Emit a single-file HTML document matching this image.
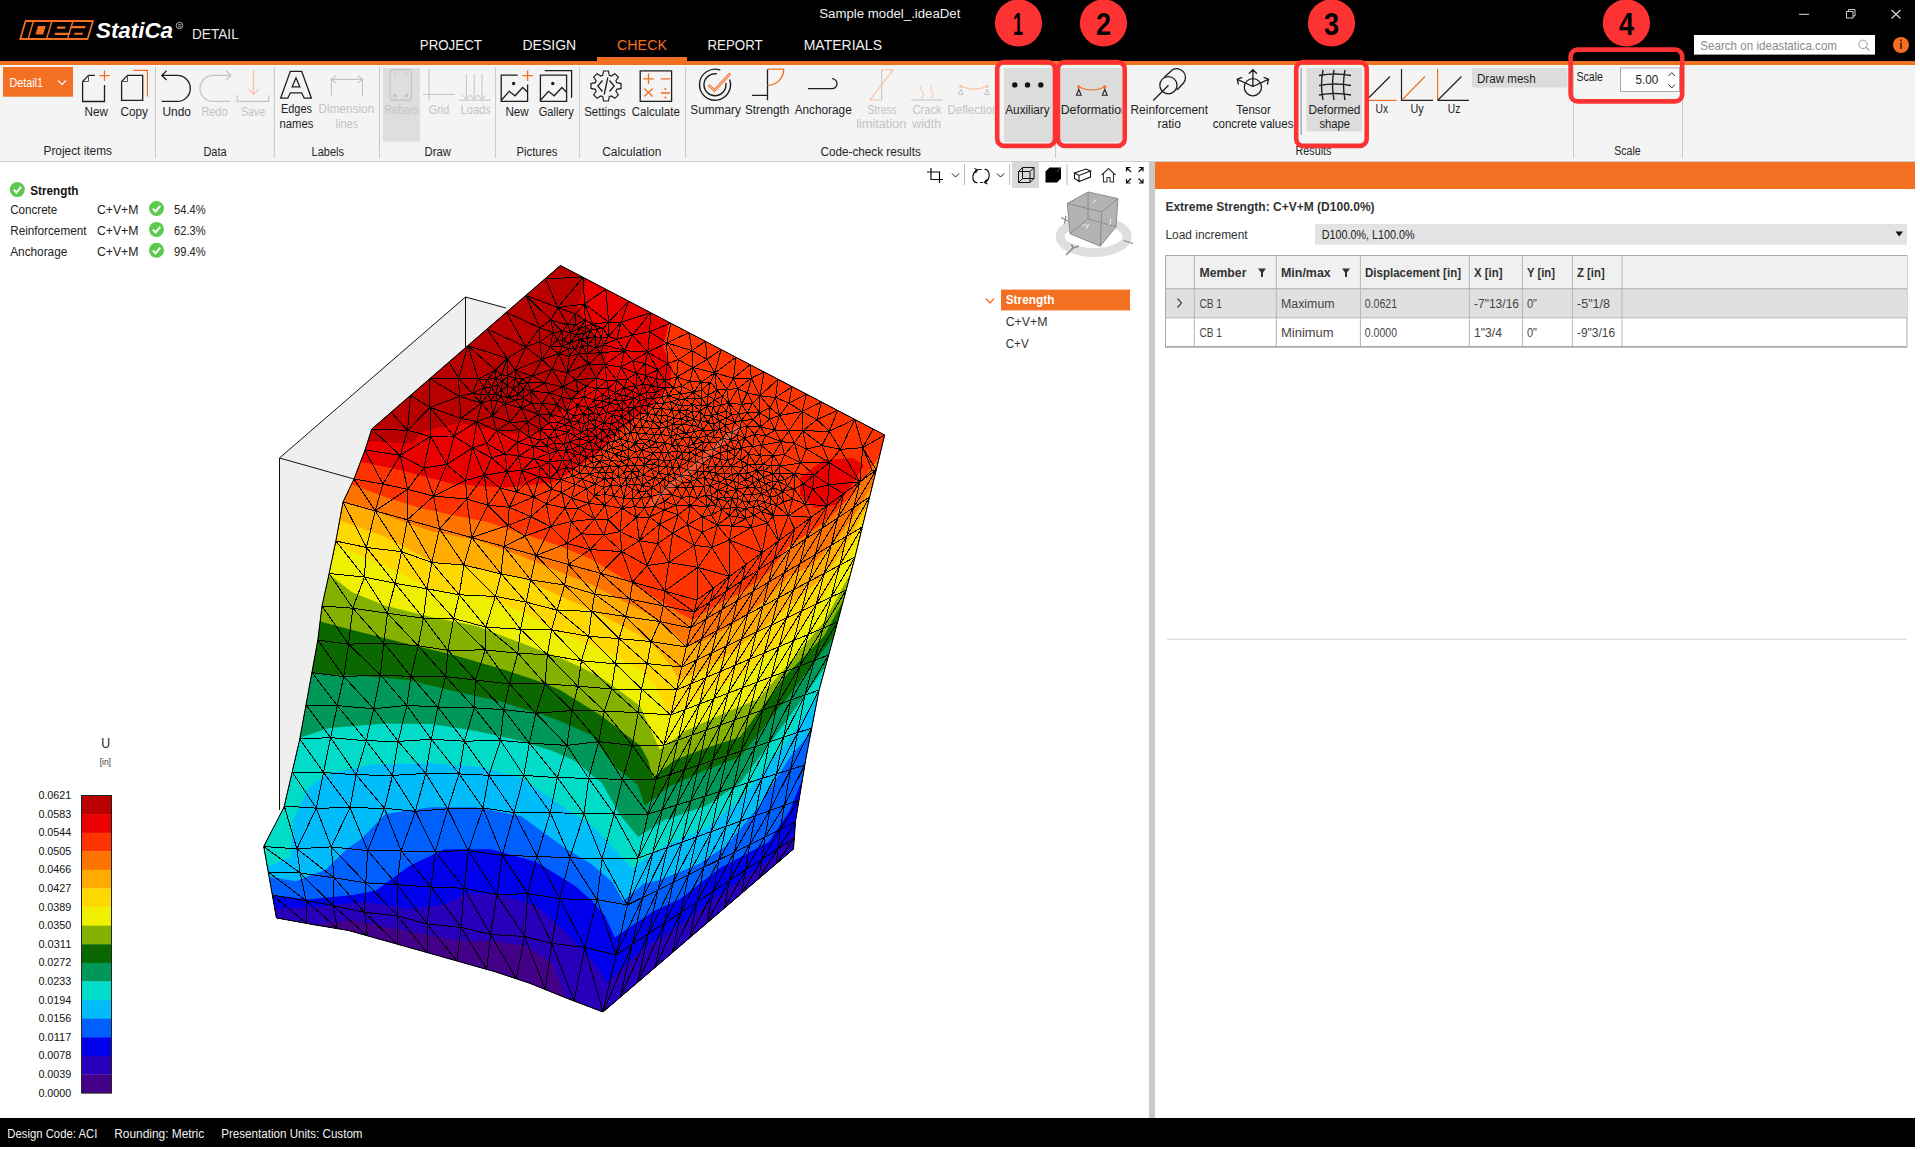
<!DOCTYPE html>
<html><head><meta charset="utf-8"><title>IDEA StatiCa Detail</title>
<style>html,body{margin:0;padding:0;background:#fff;}body{width:1920px;height:1150px;overflow:hidden;position:relative;font-family:"Liberation Sans",sans-serif;}
svg text{font-family:"Liberation Sans",sans-serif;}</style></head>
<body><svg width="1920" height="1150" viewBox="0 0 1920 1150" style="position:absolute;left:0;top:0;display:block">
<rect x="0" y="0" width="1915" height="61" fill="#000"/>
<rect x="0" y="61" width="1915" height="4" fill="#f36f21"/>
<rect x="597" y="57" width="90" height="4" fill="#f36f21"/>
<rect x="0" y="65" width="1915" height="96" fill="#f4f4f4"/>
<rect x="0" y="161" width="1915" height="1" fill="#cfcfcf"/>
<rect x="0" y="162" width="1149" height="956" fill="#fff"/>
<rect x="1149" y="162" width="6" height="956" fill="#c9c9c9"/>
<rect x="1155" y="162" width="760" height="27" fill="#f36f21"/>
<rect x="1155" y="189" width="760" height="929" fill="#fff"/>
<rect x="0" y="1118" width="1915" height="29" fill="#000"/>
<g transform="matrix(1,0,-0.3,1,12,0)"><path d="M19.9,21 H87.3 V39 H19.9 Z" fill="#000" stroke="#f36f21" stroke-width="1.8" stroke-linejoin="round"/><g fill="#f36f21"><rect x="27.1" y="21" width="1.5" height="18"/><rect x="45.5" y="21" width="1.5" height="18"/><rect x="66.5" y="21" width="1.5" height="18"/><rect x="33.8" y="26" width="7.7" height="8.5"/><rect x="53.3" y="26.5" width="8.5" height="2.2"/><rect x="52.9" y="32.7" width="15" height="2.3"/><rect x="67" y="26" width="14.5" height="2.3"/><rect x="72.4" y="32.7" width="8.4" height="2"/></g></g>
<text x="96.00" y="38.00" font-size="22.53" fill="#fff" font-weight="bold" font-style="italic" textLength="77.01" lengthAdjust="spacingAndGlyphs">StatiCa</text>
<circle cx="179.5" cy="25.5" r="3.3" fill="none" stroke="#ccc" stroke-width="0.8"/>
<text x="177.9" y="27.6" font-size="5" fill="#ccc">R</text>
<text x="192.00" y="38.75" font-size="14.90" fill="#e8e8e8" textLength="46.75" lengthAdjust="spacingAndGlyphs">DETAIL</text>
<text x="819.30" y="17.90" font-size="13.08" fill="#f0f0f0" textLength="141.10" lengthAdjust="spacingAndGlyphs">Sample model_.ideaDet</text>
<text x="419.75" y="49.75" font-size="15.41" fill="#f0f0f0" textLength="62.15" lengthAdjust="spacingAndGlyphs">PROJECT</text>
<text x="522.50" y="49.75" font-size="15.41" fill="#f0f0f0" textLength="53.75" lengthAdjust="spacingAndGlyphs">DESIGN</text>
<text x="617.00" y="49.75" font-size="15.41" fill="#f36f21" textLength="49.99" lengthAdjust="spacingAndGlyphs">CHECK</text>
<text x="707.50" y="49.75" font-size="15.41" fill="#f0f0f0" textLength="55.20" lengthAdjust="spacingAndGlyphs">REPORT</text>
<text x="803.70" y="49.75" font-size="15.41" fill="#f0f0f0" textLength="78.30" lengthAdjust="spacingAndGlyphs">MATERIALS</text>
<line x1="1799" y1="14.3" x2="1809" y2="14.3" stroke="#ddd" stroke-width="1"/>
<rect x="1846.5" y="11.5" width="6.5" height="6.5" fill="none" stroke="#ccc" stroke-width="1"/>
<path d="M1848.5,11.5 V9.5 H1855 V16 H1853" fill="none" stroke="#ccc" stroke-width="1"/>
<path d="M1891.5,10 L1900.5,18.5 M1900.5,10 L1891.5,18.5" stroke="#ddd" stroke-width="1.1"/>
<rect x="1694" y="35" width="181" height="19.6" fill="#fff"/>
<text x="1700.30" y="49.80" font-size="12.35" fill="#8a8a8a" textLength="136.70" lengthAdjust="spacingAndGlyphs">Search on ideastatica.com</text>
<circle cx="1863" cy="44.3" r="4.2" fill="none" stroke="#999" stroke-width="1"/><line x1="1866" y1="47.3" x2="1869.5" y2="50.5" stroke="#999" stroke-width="1.1"/>
<circle cx="1901" cy="45" r="8" fill="#f36f21"/>
<rect x="1900" y="42.5" width="2" height="6.5" fill="#6a2c08"/><rect x="1900" y="39.5" width="2" height="1.8" fill="#6a2c08"/>
<rect x="155.0" y="67" width="1" height="91" fill="#c8c8c8"/>
<rect x="273.8" y="67" width="1" height="91" fill="#c8c8c8"/>
<rect x="379.0" y="67" width="1" height="91" fill="#c8c8c8"/>
<rect x="495.1" y="67" width="1" height="91" fill="#c8c8c8"/>
<rect x="579.1" y="67" width="1" height="91" fill="#c8c8c8"/>
<rect x="685.1" y="67" width="1" height="91" fill="#c8c8c8"/>
<rect x="1055.0" y="67" width="1" height="91" fill="#c8c8c8"/>
<rect x="1573.0" y="67" width="1" height="91" fill="#c8c8c8"/>
<rect x="1682.0" y="67" width="1" height="91" fill="#c8c8c8"/>
<rect x="3" y="67" width="70" height="29.7" fill="#f36f21"/>
<text x="9.50" y="87.00" font-size="13.08" fill="#fff" textLength="33.50" lengthAdjust="spacingAndGlyphs">Detail1</text>
<path d="M58,80.5 L62,84.5 L66,80.5" fill="none" stroke="#fff" stroke-width="1.1"/>
<rect x="383" y="68" width="37" height="73.6" fill="#dedede"/>
<rect x="1004" y="68" width="48" height="74" fill="#dcdcdc"/>
<rect x="1060" y="68" width="62" height="74" fill="#dcdcdc"/>
<rect x="1306.4" y="68" width="55.6" height="63.4" fill="#dcdcdc"/>
<rect x="1300.5" y="68" width="1.2" height="67" fill="#9a9a9a"/>
<rect x="1472" y="68" width="95.4" height="19.5" fill="#dcdcdc"/>
<path d="M94.8,75.4 H88.5 L82.6,81.5 V101.5 H104.5 V85" fill="none" stroke="#1e1e1e" stroke-width="1.3"/>
<path d="M88.5,75.4 V81.5 H82.6" fill="none" stroke="#555" stroke-width="1.0"/>
<path d="M104.5,70.5 V81 M99.3,75.7 H109.7" fill="none" stroke="#f36f21" stroke-width="1.3"/>
<path d="M142.7,75.4 H127.5 L121.6,81.5 V100.4 H142.7 Z" fill="none" stroke="#1e1e1e" stroke-width="1.3"/>
<path d="M127.5,75.4 V81.5 H121.6" fill="none" stroke="#555" stroke-width="1.0"/>
<path d="M133.3,70.4 H147.4 V96.5" fill="none" stroke="#f36f21" stroke-width="1.2"/>
<path d="M166.6,70.8 L161.8,75.4 L166.6,80 M161.8,75.4 H177.3 A13,13 0 0 1 177.3,101.4 H161.7" fill="none" stroke="#1e1e1e" stroke-width="1.3"/>
<path d="M226,70.8 L230.8,75.4 L226,80 M230.8,75.4 H213 A13,13 0 0 0 213,101.4 H230" fill="none" stroke="#c3c3c3" stroke-width="1.2"/>
<path d="M237.2,95.2 V101.4 H268.7 V95.2" fill="none" stroke="#c3c3c3" stroke-width="1.2"/>
<path d="M253.5,70 V94 M248.6,89.2 L253.5,94.3 L258.4,89.2" fill="none" stroke="#f7c3a5" stroke-width="1.2"/>
<path d="M280.6,98.2 L290.3,71.3 H301.7 L311.4,98.2 H304.2 L301.6,92.8 H290.4 L287.8,98.2 Z M292.2,86.8 L296,78 L299.8,86.8 Z" fill="none" stroke="#1e1e1e" stroke-width="1.3"/>
<path d="M331.3,78 V96 M362.5,78 V96 M331.5,79.4 H362.3 M335.8,75.6 L331.6,79.4 L335.8,83.2 M358,75.6 L362.2,79.4 L358,83.2" fill="none" stroke="#c3c3c3" stroke-width="1.1"/>
<path d="M393,69.6 H408.5 Q411.4,69.6 411.4,72.5 V97.3 Q411.4,100.2 408.5,100.2 H393 Q390.1,100.2 390.1,97.3 V72.5 Q390.1,69.6 393,69.6 Z" fill="none" stroke="#c3c3c3" stroke-width="1.2"/>
<g fill="#c3c3c3"><circle cx="394.8" cy="73.9" r="0.9"/><circle cx="406.6" cy="73.9" r="0.9"/><circle cx="394.8" cy="95.6" r="1.8"/><circle cx="406.6" cy="95.6" r="1.8"/></g>
<path d="M429.1,69.5 V100.5 M423,94.5 H455" fill="none" stroke="#c3c3c3" stroke-width="1.1"/>
<path d="M466.4,74 V99.5 M474.2,74 V99.5 M482,74 V99.5 M459,100.2 H491 M462.5,95 L466.4,99.5 L470.3,95 M470.3,95 L474.2,99.5 L478.1,95 M478.1,95 L482,99.5 L485.9,95" fill="none" stroke="#c3c3c3" stroke-width="1.0"/>
<path d="M517.7,75.2 H501.2 V101.3 H527.6 V84.6 M501.5,100 L509.3,91.3 L515,95.8 L522.7,87.5 L527.4,92" fill="none" stroke="#1e1e1e" stroke-width="1.3"/>
<circle cx="513.6" cy="83.5" r="1.7" fill="#1e1e1e"/>
<path d="M527.6,70.3 V80.9 M522.3,75.6 H532.9" fill="none" stroke="#f36f21" stroke-width="1.3"/>
<path d="M540.4,75.2 H566.6 V101.3 H540.4 Z M540.7,100 L548.5,91.3 L554.2,95.8 L561.9,87.5 L566.3,92" fill="none" stroke="#1e1e1e" stroke-width="1.3"/>
<circle cx="552.8" cy="83.5" r="1.7" fill="#1e1e1e"/>
<path d="M544.8,70.7 H571.6 V97.7" fill="none" stroke="#1e1e1e" stroke-width="1.3"/>
<path d="M616.70,82.69 L621.01,83.58 L621.01,88.42 L616.70,89.31 L615.91,91.23 L618.32,94.90 L614.90,98.32 L611.23,95.91 L609.31,96.70 L608.42,101.01 L603.58,101.01 L602.69,96.70 L600.77,95.91 L597.10,98.32 L593.68,94.90 L596.09,91.23 L595.30,89.31 L590.99,88.42 L590.99,83.58 L595.30,82.69 L596.09,80.77 L593.68,77.10 L597.10,73.68 L600.77,76.09 L602.69,75.30 L603.58,70.99 L608.42,70.99 L609.31,75.30 L611.23,76.09 L614.90,73.68 L618.32,77.10 L615.91,80.77 Z" fill="none" stroke="#1e1e1e" stroke-width="1.2"/>
<path d="M602.5,80.5 L597.8,86 L602.5,91.5 M609.5,80.5 L614.2,86 L609.5,91.5 M607.8,77.5 L604.2,94.5" fill="none" stroke="#1e1e1e" stroke-width="1.3"/>
<path d="M640.2,70.8 H671.6 V101.3 H640.2 Z" fill="none" stroke="#1e1e1e" stroke-width="1.3"/>
<path d="M648.5,73.5 V84 M643.2,78.8 H653.8 M660.8,78.8 H670 M644.3,88.5 L652.7,96.5 M652.7,88.5 L644.3,96.5 M660.8,93 H670" fill="none" stroke="#f36f21" stroke-width="1.3"/>
<g fill="#f36f21"><circle cx="665.4" cy="89" r="1"/><circle cx="665.4" cy="97.5" r="1"/></g>
<path d="M729.6,79.4 A15.5,15.5 0 1 1 720.3,70.1" fill="none" stroke="#1e1e1e" stroke-width="1.4"/>
<path d="M725.8,82.8 A11,11 0 1 1 716.9,73.9" fill="none" stroke="#1e1e1e" stroke-width="1.4"/>
<path d="M708.5,85 L714.5,90.5 L730.3,73.5" fill="none" stroke="#f36f21" stroke-width="2.6"/>
<path d="M708.5,85 L714.5,90.5 L730.3,73.5" fill="none" stroke="#f4f4f4" stroke-width="0.9"/>
<path d="M752,95.3 H767.5 M767.5,69.2 V100.3" fill="none" stroke="#1e1e1e" stroke-width="1.3"/>
<path d="M767.5,69.2 H783.7 A16,16 0 0 1 767.5,85.3" fill="none" stroke="#f36f21" stroke-width="1.3"/>
<path d="M808,88.7 H832 A5,5 0 0 0 832,78.7" fill="none" stroke="#1e1e1e" stroke-width="1.3"/>
<path d="M881.7,100 H870 L893.3,69.7 H881.7" fill="none" stroke="#f7c3a5" stroke-width="1.1"/>
<path d="M881.7,69.7 V100" fill="none" stroke="#c3c3c3" stroke-width="1.1"/>
<path d="M911.3,100 H942.5" fill="none" stroke="#c3c3c3" stroke-width="1.1"/>
<path d="M922,85 Q919,88 922,91 Q925,94 922,98 M932,85 Q929,88 932,91 Q935,94 932,98" fill="none" stroke="#f7c3a5" stroke-width="1.0"/>
<path d="M960.8,86.3 Q974,92 987,86.3" fill="none" stroke="#f7c3a5" stroke-width="1.1"/>
<g fill="#f7c3a5"><circle cx="960.8" cy="86.3" r="1.6"/><circle cx="987" cy="86.3" r="1.6"/></g>
<path d="M960.8,89 L958.5,94.5 H963.1 Z M987,89 L984.7,94.5 H989.3 Z" fill="none" stroke="#c3c3c3" stroke-width="1.0"/>
<g fill="#111"><circle cx="1014.8" cy="84.9" r="2.7"/><circle cx="1027.5" cy="84.9" r="2.7"/><circle cx="1040.8" cy="84.9" r="2.7"/></g>
<path d="M1078.8,87 Q1091.8,93 1104.8,87" fill="none" stroke="#f36f21" stroke-width="1.2"/>
<g fill="#f36f21"><circle cx="1078.8" cy="87" r="1.7"/><circle cx="1104.8" cy="87" r="1.7"/></g>
<path d="M1078.8,89.5 L1076.4,95.3 H1081.2 Z M1104.8,89.5 L1102.4,95.3 H1107.2 Z" fill="none" stroke="#222" stroke-width="1.1"/>
<path d="M1153.3,100.5 L1168.5,85.3" fill="none" stroke="#1e1e1e" stroke-width="1.3"/>
<circle cx="1168.4" cy="85.2" r="8.6" fill="none" stroke="#1e1e1e" stroke-width="1.3"/>
<path d="M1164,77.5 L1172.5,69.7 A8.8,8.8 0 0 1 1183.5,83 L1177,90" fill="none" stroke="#1e1e1e" stroke-width="1.3"/>
<circle cx="1252.9" cy="87.2" r="8.6" fill="none" stroke="#1e1e1e" stroke-width="1.3"/>
<path d="M1252.9,86.5 V70 M1248.9,73.8 L1252.9,69.6 L1256.9,73.8 M1252.9,86.5 L1237.4,79.4 M1252.9,86.5 L1268.4,79.4 M1238.5,84.5 L1237.2,79.2 L1242.2,77.4 M1267.3,84.5 L1268.6,79.2 L1263.6,77.4" fill="none" stroke="#1e1e1e" stroke-width="1.3"/>
<path d="M1323,70 Q1320,85 1323,100 M1334,70 Q1331,85 1334,100 M1345,70 Q1342,85 1345,100 M1319,75.5 Q1335,72.5 1351,75.5 M1319,85.5 Q1335,82.5 1351,85.5 M1319,95 Q1335,92 1351,95" fill="none" stroke="#1e1e1e" stroke-width="1.4"/>
<path d="M1369,97.5 L1390,76.5" fill="none" stroke="#1e1e1e" stroke-width="1.2"/>
<path d="M1368.6,100.4 H1396.7" fill="none" stroke="#f36f21" stroke-width="1.2"/>
<path d="M1401.5,69 V100.4 H1433" fill="none" stroke="#1e1e1e" stroke-width="1.2"/>
<path d="M1402,100 L1425,76.5" fill="none" stroke="#f36f21" stroke-width="1.2"/>
<path d="M1437.6,69 V100.4" fill="none" stroke="#f36f21" stroke-width="1.2"/>
<path d="M1437.6,100.4 H1469 M1438,100 L1461.5,76.5" fill="none" stroke="#1e1e1e" stroke-width="1.2"/>
<text x="84.60" y="115.70" font-size="12.21" fill="#1e1e1e" textLength="23.37" lengthAdjust="spacingAndGlyphs">New</text>
<text x="120.60" y="115.70" font-size="12.21" fill="#1e1e1e" textLength="27.41" lengthAdjust="spacingAndGlyphs">Copy</text>
<text x="162.50" y="115.70" font-size="12.21" fill="#1e1e1e" textLength="28.50" lengthAdjust="spacingAndGlyphs">Undo</text>
<text x="201.40" y="115.70" font-size="12.21" fill="#c3c3c3" textLength="26.10" lengthAdjust="spacingAndGlyphs">Redo</text>
<text x="241.00" y="115.70" font-size="12.21" fill="#c3c3c3" textLength="24.00" lengthAdjust="spacingAndGlyphs">Save</text>
<text x="281.00" y="113.40" font-size="12.21" fill="#1e1e1e" textLength="31.01" lengthAdjust="spacingAndGlyphs">Edges</text>
<text x="279.60" y="128.40" font-size="12.21" fill="#1e1e1e" textLength="33.81" lengthAdjust="spacingAndGlyphs">names</text>
<text x="318.60" y="113.40" font-size="12.21" fill="#c3c3c3" textLength="55.60" lengthAdjust="spacingAndGlyphs">Dimension</text>
<text x="335.50" y="128.40" font-size="12.21" fill="#c3c3c3" textLength="22.80" lengthAdjust="spacingAndGlyphs">lines</text>
<text x="384.50" y="113.80" font-size="12.21" fill="#c3c3c3" textLength="34.00" lengthAdjust="spacingAndGlyphs">Rebars</text>
<text x="428.80" y="113.80" font-size="12.21" fill="#c3c3c3" textLength="20.40" lengthAdjust="spacingAndGlyphs">Grid</text>
<text x="460.60" y="113.80" font-size="12.21" fill="#c3c3c3" textLength="30.10" lengthAdjust="spacingAndGlyphs">Loads</text>
<text x="505.40" y="115.80" font-size="12.21" fill="#1e1e1e" textLength="23.27" lengthAdjust="spacingAndGlyphs">New</text>
<text x="538.70" y="115.80" font-size="12.21" fill="#1e1e1e" textLength="35.19" lengthAdjust="spacingAndGlyphs">Gallery</text>
<text x="584.20" y="115.80" font-size="12.21" fill="#1e1e1e" textLength="41.50" lengthAdjust="spacingAndGlyphs">Settings</text>
<text x="631.80" y="115.80" font-size="12.21" fill="#1e1e1e" textLength="48.00" lengthAdjust="spacingAndGlyphs">Calculate</text>
<text x="690.30" y="113.70" font-size="12.21" fill="#1e1e1e" textLength="50.50" lengthAdjust="spacingAndGlyphs">Summary</text>
<text x="745.00" y="113.70" font-size="12.21" fill="#1e1e1e" textLength="44.20" lengthAdjust="spacingAndGlyphs">Strength</text>
<text x="794.70" y="113.70" font-size="12.21" fill="#1e1e1e" textLength="57.00" lengthAdjust="spacingAndGlyphs">Anchorage</text>
<text x="867.50" y="113.70" font-size="12.21" fill="#c3c3c3" textLength="29.20" lengthAdjust="spacingAndGlyphs">Stress</text>
<text x="856.30" y="128.30" font-size="12.21" fill="#c3c3c3" textLength="50.00" lengthAdjust="spacingAndGlyphs">limitation</text>
<text x="912.50" y="113.70" font-size="12.21" fill="#c3c3c3" textLength="29.18" lengthAdjust="spacingAndGlyphs">Crack</text>
<text x="912.03" y="128.30" font-size="12.21" fill="#c3c3c3" textLength="29.28" lengthAdjust="spacingAndGlyphs">width</text>
<svg x="940" y="95" width="54" height="30" overflow="hidden"><text x="7.50" y="18.70" font-size="12.21" fill="#c3c3c3" textLength="50.89" lengthAdjust="spacingAndGlyphs">Deflection</text></svg>
<text x="1005.30" y="114.10" font-size="12.21" fill="#1e1e1e" textLength="44.30" lengthAdjust="spacingAndGlyphs">Auxiliary</text>
<svg x="1060" y="95" width="62" height="30" overflow="hidden"><text x="0.70" y="19.10" font-size="12.21" fill="#1e1e1e" textLength="67.18" lengthAdjust="spacingAndGlyphs">Deformation</text></svg>
<text x="1130.50" y="113.90" font-size="12.21" fill="#1e1e1e" textLength="77.50" lengthAdjust="spacingAndGlyphs">Reinforcement</text>
<text x="1157.50" y="128.40" font-size="12.21" fill="#1e1e1e" textLength="23.50" lengthAdjust="spacingAndGlyphs">ratio</text>
<text x="1236.20" y="113.90" font-size="12.21" fill="#1e1e1e" textLength="34.71" lengthAdjust="spacingAndGlyphs">Tensor</text>
<text x="1212.80" y="128.40" font-size="12.21" fill="#1e1e1e" textLength="80.60" lengthAdjust="spacingAndGlyphs">concrete values</text>
<text x="1308.50" y="114.00" font-size="12.21" fill="#1e1e1e" textLength="51.90" lengthAdjust="spacingAndGlyphs">Deformed</text>
<text x="1319.40" y="128.00" font-size="12.21" fill="#1e1e1e" textLength="30.60" lengthAdjust="spacingAndGlyphs">shape</text>
<text x="1375.50" y="113.30" font-size="12.21" fill="#1e1e1e" textLength="12.50" lengthAdjust="spacingAndGlyphs">Ux</text>
<text x="1410.40" y="113.30" font-size="12.21" fill="#1e1e1e" textLength="13.20" lengthAdjust="spacingAndGlyphs">Uy</text>
<text x="1447.70" y="113.30" font-size="12.21" fill="#1e1e1e" textLength="12.60" lengthAdjust="spacingAndGlyphs">Uz</text>
<text x="1477.00" y="83.00" font-size="12.21" fill="#1e1e1e" textLength="58.60" lengthAdjust="spacingAndGlyphs">Draw mesh</text>
<text x="1576.40" y="80.70" font-size="12.21" fill="#1e1e1e" textLength="26.51" lengthAdjust="spacingAndGlyphs">Scale</text>
<text x="43.50" y="155.30" font-size="12.21" fill="#262626" textLength="68.50" lengthAdjust="spacingAndGlyphs">Project items</text>
<text x="203.40" y="155.50" font-size="12.21" fill="#262626" textLength="23.19" lengthAdjust="spacingAndGlyphs">Data</text>
<text x="311.50" y="155.50" font-size="12.21" fill="#262626" textLength="32.50" lengthAdjust="spacingAndGlyphs">Labels</text>
<text x="424.50" y="155.50" font-size="12.21" fill="#262626" textLength="26.27" lengthAdjust="spacingAndGlyphs">Draw</text>
<text x="516.40" y="155.50" font-size="12.21" fill="#262626" textLength="41.00" lengthAdjust="spacingAndGlyphs">Pictures</text>
<text x="602.20" y="155.50" font-size="12.21" fill="#262626" textLength="59.10" lengthAdjust="spacingAndGlyphs">Calculation</text>
<text x="820.50" y="155.80" font-size="12.21" fill="#262626" textLength="100.30" lengthAdjust="spacingAndGlyphs">Code-check results</text>
<text x="1295.60" y="155.10" font-size="12.21" fill="#262626" textLength="35.91" lengthAdjust="spacingAndGlyphs">Results</text>
<text x="1614.30" y="155.20" font-size="12.21" fill="#262626" textLength="26.41" lengthAdjust="spacingAndGlyphs">Scale</text>
<rect x="1620.5" y="68" width="59" height="23.5" fill="#fff" stroke="#ababab" stroke-width="1"/>
<text x="1635.60" y="83.80" font-size="12.50" fill="#222" textLength="22.80" lengthAdjust="spacingAndGlyphs">5.00</text>
<path d="M1668.5,76 L1671.8,72.5 L1675,76 M1668.5,84.5 L1671.8,88 L1675,84.5" fill="none" stroke="#333" stroke-width="1"/>
<circle cx="1018.5" cy="23" r="23.6" fill="#fd3333"/>
<text x="1013.00" y="34.80" font-size="31.40" fill="#000" font-weight="bold" textLength="10.00" lengthAdjust="spacingAndGlyphs">1</text>
<circle cx="1103.5" cy="23" r="23.6" fill="#fd3333"/>
<text x="1096.00" y="34.80" font-size="31.40" fill="#000" font-weight="bold" textLength="15.00" lengthAdjust="spacingAndGlyphs">2</text>
<circle cx="1331.5" cy="23" r="23.6" fill="#fd3333"/>
<text x="1324.00" y="34.80" font-size="31.40" fill="#000" font-weight="bold" textLength="15.00" lengthAdjust="spacingAndGlyphs">3</text>
<circle cx="1626.4" cy="23" r="23.6" fill="#fd3333"/>
<text x="1618.90" y="34.80" font-size="31.40" fill="#000" font-weight="bold" textLength="15.00" lengthAdjust="spacingAndGlyphs">4</text>
<rect x="997.2" y="62.1" width="57.7" height="83.8" rx="7" fill="none" stroke="#fd3333" stroke-width="4.6"/>
<rect x="1057.9" y="62.1" width="66.8" height="83.8" rx="7" fill="none" stroke="#fd3333" stroke-width="4.6"/>
<rect x="1296.2" y="62.1" width="70.5" height="83.8" rx="7" fill="none" stroke="#fd3333" stroke-width="4.6"/>
<rect x="1570.6" y="49.6" width="111.6" height="51.8" rx="7" fill="none" stroke="#fd3333" stroke-width="4.6"/>
<circle cx="17.3" cy="189.6" r="7.5" fill="#5dc94d"/>
<path d="M13.7,189.8 L16.3,192.6 L21.1,187.0" fill="none" stroke="#fff" stroke-width="2"/>
<text x="30.20" y="195.20" font-size="13.08" fill="#111" font-weight="bold" textLength="48.30" lengthAdjust="spacingAndGlyphs">Strength</text>
<text x="10.20" y="213.80" font-size="12.50" fill="#222" textLength="47.10" lengthAdjust="spacingAndGlyphs">Concrete</text>
<text x="96.90" y="213.80" font-size="12.50" fill="#222" textLength="41.60" lengthAdjust="spacingAndGlyphs">C+V+M</text>
<circle cx="156.5" cy="208.5" r="7.5" fill="#5dc94d"/>
<path d="M152.9,208.7 L155.5,211.5 L160.3,205.9" fill="none" stroke="#fff" stroke-width="2"/>
<text x="174.00" y="213.80" font-size="12.50" fill="#222" textLength="31.61" lengthAdjust="spacingAndGlyphs">54.4%</text>
<text x="10.20" y="234.70" font-size="12.50" fill="#222" textLength="76.30" lengthAdjust="spacingAndGlyphs">Reinforcement</text>
<text x="96.90" y="234.70" font-size="12.50" fill="#222" textLength="41.60" lengthAdjust="spacingAndGlyphs">C+V+M</text>
<circle cx="156.5" cy="229.4" r="7.5" fill="#5dc94d"/>
<path d="M152.9,229.6 L155.5,232.4 L160.3,226.8" fill="none" stroke="#fff" stroke-width="2"/>
<text x="174.00" y="234.70" font-size="12.50" fill="#222" textLength="31.61" lengthAdjust="spacingAndGlyphs">62.3%</text>
<text x="10.20" y="255.60" font-size="12.50" fill="#222" textLength="57.10" lengthAdjust="spacingAndGlyphs">Anchorage</text>
<text x="96.90" y="255.60" font-size="12.50" fill="#222" textLength="41.60" lengthAdjust="spacingAndGlyphs">C+V+M</text>
<circle cx="156.5" cy="250.3" r="7.5" fill="#5dc94d"/>
<path d="M152.9,250.5 L155.5,253.3 L160.3,247.7" fill="none" stroke="#fff" stroke-width="2"/>
<text x="174.00" y="255.60" font-size="12.50" fill="#222" textLength="31.61" lengthAdjust="spacingAndGlyphs">99.4%</text>
<rect x="1012" y="162" width="27" height="26" fill="#d9d9d9"/>
<path d="M931,168 V179.5 H943 M927,172 H939.5 V183" fill="none" stroke="#111" stroke-width="1.2"/>
<path d="M952,173.5 L955.5,177 L959,173.5" fill="none" stroke="#111" stroke-width="1.0"/>
<path d="M964.5,164 V185" fill="none" stroke="#bbb" stroke-width="1"/>
<path d="M976.5,170 Q972,174 973,179 Q974,183 977.5,182.5 M974.5,168.5 L977.5,170 L975.5,173 M985.5,182.5 Q990,178.5 989,173.5 Q988,169 984.5,169.5 M987.5,184 L984.5,182.5 L986.5,179.5 M978,169.5 H981.5 M983,182.5 H980" fill="none" stroke="#111" stroke-width="1.2"/>
<path d="M997,173.5 L1000.5,177 L1004,173.5" fill="none" stroke="#111" stroke-width="1.0"/>
<path d="M1009.6,164 V185" fill="none" stroke="#bbb" stroke-width="1"/>
<path d="M1018.5,171.5 L1022.5,167.5 H1034 V178.5 L1030,182.5 H1018.5 Z M1018.5,171.5 H1030 V182.5 M1030,171.5 L1034,167.5 M1022.5,167.5 V178.5 H1034 M1022.5,178.5 L1018.5,182.5" fill="none" stroke="#111" stroke-width="1.0"/>
<path d="M1045.5,171.5 L1049.5,167.5 H1061 V178.5 L1057,182.5 H1045.5 Z" fill="#000"/>
<path d="M1057,171.5 L1061,167.5" fill="none" stroke="#888" stroke-width="0.8"/>
<path d="M1067,164 V185" fill="none" stroke="#bbb" stroke-width="1"/>
<path d="M1074.5,173 L1086,169 L1090.5,171 L1079,175.5 Z M1074.5,173 V178.5 L1079,181.5 V175.5 M1079,181.5 L1090.5,177 V171" fill="none" stroke="#111" stroke-width="1.1"/>
<path d="M1101.5,175 L1108.5,168.5 L1115.5,175 M1103.5,173.5 V182 H1107 V177.5 H1110 V182 H1113.5 V173.5" fill="none" stroke="#333" stroke-width="1.1"/>
<path d="M1126.5,171.5 V167.5 H1130.5 M1126.5,167.5 L1131,172 M1143,171.5 V167.5 H1139 M1143,167.5 L1138.5,172 M1126.5,179 V183 H1130.5 M1126.5,183 L1131,178.5 M1143,179 V183 H1139 M1143,183 L1138.5,178.5" fill="none" stroke="#111" stroke-width="1.2"/>
<ellipse cx="1093.7" cy="236.5" rx="33.5" ry="16" fill="none" stroke="#dedede" stroke-width="9"/>
<path d="M1067.3,203.4 L1088,192 L1118,198.6 L1116,226.7 L1100.3,246.2 L1070,233.7 Z" fill="#b3b3b3" stroke="#8c8c8c" stroke-width="1"/>
<path d="M1067.3,203.4 L1101.7,212 L1118,198.6 M1101.7,212 L1100.3,246.2 M1088,192 V219 L1070,233.7 M1088,219 L1116,226.7" fill="none" stroke="#8c8c8c" stroke-width="1"/>
<path d="M1061,217.5 L1069,221.5 M1066,216 L1064.5,223.5 M1123.5,240.5 L1133,243.5" fill="none" stroke="#8a8a8a" stroke-width="1.3" stroke-dasharray="none"/>
<path d="M1066,255 L1073,248 M1073,248 L1071.5,244 M1073,248 L1079,246" fill="none" stroke="#8a8a8a" stroke-width="1.6"/>
<path d="M1092.5,202.5 L1096.5,199.8 M1082,226 L1084.5,224 M1085.5,224 L1087,227 V229 M1087,227 L1089,224 M1110.5,218.5 V223 L1109,225" fill="none" stroke="#f2f2f2" stroke-width="0.9"/>
<path d="M986,298.5 L990,303 L994,298.5" fill="none" stroke="#f36f21" stroke-width="1.2"/>
<rect x="1001" y="289.6" width="129" height="20.8" fill="#f36f21"/>
<text x="1005.70" y="304.00" font-size="12.65" fill="#fff" font-weight="bold" textLength="48.70" lengthAdjust="spacingAndGlyphs">Strength</text>
<text x="1005.70" y="326.00" font-size="12.50" fill="#333" textLength="41.80" lengthAdjust="spacingAndGlyphs">C+V+M</text>
<text x="1005.70" y="347.50" font-size="12.50" fill="#333" textLength="23.00" lengthAdjust="spacingAndGlyphs">C+V</text>
<text x="101.30" y="748.40" font-size="15.41" fill="#222" textLength="8.90" lengthAdjust="spacingAndGlyphs">U</text>
<text x="99.70" y="765.00" font-size="9.45" fill="#333" textLength="11.20" lengthAdjust="spacingAndGlyphs">[in]</text>
<rect x="81.5" y="795.50" width="30" height="18.89" fill="#b80000"/>
<rect x="81.5" y="814.09" width="30" height="18.89" fill="#ea0000"/>
<rect x="81.5" y="832.69" width="30" height="18.89" fill="#ff3300"/>
<rect x="81.5" y="851.28" width="30" height="18.89" fill="#ff7300"/>
<rect x="81.5" y="869.88" width="30" height="18.89" fill="#ffab00"/>
<rect x="81.5" y="888.47" width="30" height="18.89" fill="#ffd800"/>
<rect x="81.5" y="907.06" width="30" height="18.89" fill="#eef000"/>
<rect x="81.5" y="925.66" width="30" height="18.89" fill="#84b000"/>
<rect x="81.5" y="944.25" width="30" height="18.89" fill="#0b6800"/>
<rect x="81.5" y="962.84" width="30" height="18.89" fill="#009858"/>
<rect x="81.5" y="981.44" width="30" height="18.89" fill="#00dcc8"/>
<rect x="81.5" y="1000.03" width="30" height="18.89" fill="#00bcfa"/>
<rect x="81.5" y="1018.62" width="30" height="18.89" fill="#0060ff"/>
<rect x="81.5" y="1037.22" width="30" height="18.89" fill="#0000ec"/>
<rect x="81.5" y="1055.81" width="30" height="18.89" fill="#2800bc"/>
<rect x="81.5" y="1074.41" width="30" height="18.89" fill="#440088"/>
<rect x="81.5" y="795.5" width="30" height="297.5" fill="none" stroke="#222" stroke-width="1"/>
<text x="38.40" y="799.10" font-size="10.76" fill="#111" textLength="32.90" lengthAdjust="spacingAndGlyphs">0.0621</text>
<text x="38.40" y="817.69" font-size="10.76" fill="#111" textLength="32.90" lengthAdjust="spacingAndGlyphs">0.0583</text>
<text x="38.40" y="836.29" font-size="10.76" fill="#111" textLength="32.90" lengthAdjust="spacingAndGlyphs">0.0544</text>
<text x="38.40" y="854.88" font-size="10.76" fill="#111" textLength="32.90" lengthAdjust="spacingAndGlyphs">0.0505</text>
<text x="38.40" y="873.48" font-size="10.76" fill="#111" textLength="32.90" lengthAdjust="spacingAndGlyphs">0.0466</text>
<text x="38.40" y="892.07" font-size="10.76" fill="#111" textLength="32.90" lengthAdjust="spacingAndGlyphs">0.0427</text>
<text x="38.40" y="910.66" font-size="10.76" fill="#111" textLength="32.90" lengthAdjust="spacingAndGlyphs">0.0389</text>
<text x="38.40" y="929.26" font-size="10.76" fill="#111" textLength="32.90" lengthAdjust="spacingAndGlyphs">0.0350</text>
<text x="38.40" y="947.85" font-size="10.76" fill="#111" textLength="32.90" lengthAdjust="spacingAndGlyphs">0.0311</text>
<text x="38.40" y="966.44" font-size="10.76" fill="#111" textLength="32.90" lengthAdjust="spacingAndGlyphs">0.0272</text>
<text x="38.40" y="985.04" font-size="10.76" fill="#111" textLength="32.90" lengthAdjust="spacingAndGlyphs">0.0233</text>
<text x="38.40" y="1003.63" font-size="10.76" fill="#111" textLength="32.90" lengthAdjust="spacingAndGlyphs">0.0194</text>
<text x="38.40" y="1022.23" font-size="10.76" fill="#111" textLength="32.90" lengthAdjust="spacingAndGlyphs">0.0156</text>
<text x="38.40" y="1040.82" font-size="10.76" fill="#111" textLength="32.90" lengthAdjust="spacingAndGlyphs">0.0117</text>
<text x="38.40" y="1059.41" font-size="10.76" fill="#111" textLength="32.90" lengthAdjust="spacingAndGlyphs">0.0078</text>
<text x="38.40" y="1078.01" font-size="10.76" fill="#111" textLength="32.90" lengthAdjust="spacingAndGlyphs">0.0039</text>
<text x="38.40" y="1096.60" font-size="10.76" fill="#111" textLength="32.90" lengthAdjust="spacingAndGlyphs">0.0000</text>
<path d="M465,297 L560,322 L560,880 L280,810 V458 Z" fill="#efefef"/>
<path d="M506,308 L465.5,297 L279.5,458 V810 M279.5,458 L354,479 M465.5,297 V372" fill="none" stroke="#111" stroke-width="1"/>
<defs><clipPath id="mc"><polygon points="560.4,265.4 884.7,435.0 876.0,471.0 854.3,560.0 834.7,633.0 819.0,690.4 806.0,758.0 795.6,820.7 793.5,849.0 603.0,1012.0 566.3,998.1 529.6,983.2 495.2,971.8 421.9,951.1 348.5,930.5 314.2,924.8 276.4,917.9 263.7,846.5 284.0,807.2 299.7,739.4 317.8,640.0 322.0,606.0 329.0,574.0 336.0,540.0 343.0,502.0 354.0,479.0 365.0,450.0 371.7,429.0"/></clipPath></defs>
<g clip-path="url(#mc)">
<rect x="250" y="250" width="650" height="780" fill="#b80000"/>
<polygon points="340.0,441.0 372.5,441.6 412.2,443.7 422.6,431.2 460.2,422.8 506.0,433.2 539.5,433.2 552.0,418.6 581.2,393.6 604.2,368.5 608.4,347.7 586.5,326.8 577.0,306.0 584.4,286.0 592.0,262.0 950.0,262.0 950.0,1100.0 200.0,1100.0 200.0,441.0" fill="#ea0000"/>
<polygon points="330.0,462.0 361.7,462.0 402.0,470.6 453.0,484.0 504.0,487.6 554.7,482.0 575.0,469.0 597.6,453.4 620.0,430.8 649.6,408.0 670.0,385.6 672.0,367.5 663.0,347.0 669.0,322.3 676.0,300.0 950.0,300.0 950.0,1100.0 200.0,1100.0 200.0,462.0" fill="#ff3300"/>
<polygon points="800.0,478.0 823.0,460.0 853.0,458.0 864.0,465.0 850.0,488.0 836.0,505.0 815.0,508.0 800.0,495.0" fill="#ea0000"/>
<polygon points="320.0,483.0 349.4,483.6 385.6,497.2 421.8,508.5 453.4,515.3 487.3,522.0 521.2,533.3 560.0,546.0 591.3,559.3 622.6,578.0 654.0,597.0 677.0,611.5 692.6,620.0 718.7,604.0 743.7,591.0 768.8,572.0 789.6,545.0 810.5,532.0 831.4,516.0 853.0,494.0 876.0,461.0 900.0,430.0 950.0,430.0 950.0,1100.0 200.0,1100.0 200.0,483.0" fill="#ff7300"/>
<polygon points="310.0,501.0 342.7,501.7 385.6,515.3 430.8,531.0 476.0,540.0 521.2,556.0 560.0,571.9 591.3,584.4 622.6,601.0 640.0,609.5 654.0,618.0 677.0,636.0 686.4,647.0 706.1,640.0 737.5,622.0 768.8,597.0 789.6,576.0 810.5,566.0 831.4,545.0 852.3,518.0 873.0,484.0 900.0,445.0 950.0,445.0 950.0,1100.0 200.0,1100.0 200.0,501.0" fill="#ffab00"/>
<polygon points="300.0,519.0 338.0,519.8 385.6,537.0 430.8,561.0 476.0,568.0 521.2,578.0 560.0,596.0 591.3,610.0 622.6,626.0 640.0,635.5 656.0,648.0 670.0,665.0 678.8,680.0 706.1,669.0 737.5,648.0 768.8,623.0 800.0,597.0 821.0,579.0 841.0,554.0 867.0,506.0 900.0,460.0 950.0,460.0 950.0,1100.0 200.0,1100.0 200.0,519.0" fill="#ffd800"/>
<polygon points="300.0,544.0 333.6,544.6 385.6,566.0 430.8,589.0 476.0,595.0 521.2,611.0 560.0,633.0 591.3,645.0 622.6,660.0 640.0,669.5 655.0,685.0 668.0,715.0 706.1,693.0 737.5,679.0 768.8,654.0 800.0,627.0 824.0,598.0 859.0,535.0 900.0,490.0 950.0,490.0 950.0,1100.0 200.0,1100.0 200.0,544.0" fill="#eef000"/>
<polygon points="300.0,574.0 329.0,574.0 351.7,592.0 385.6,605.7 430.8,617.0 476.0,626.0 521.2,643.0 560.0,658.0 580.9,667.0 601.8,678.0 622.6,693.0 640.0,706.0 650.0,728.0 659.7,749.5 685.3,731.0 727.0,712.0 758.3,699.0 785.0,668.0 824.0,622.0 849.0,576.0 880.0,540.0 950.0,540.0 950.0,1100.0 200.0,1100.0 200.0,574.0" fill="#84b000"/>
<polygon points="290.0,621.0 320.0,621.5 363.0,632.8 408.2,644.0 453.4,655.0 498.6,668.0 543.8,683.0 560.0,690.0 601.8,716.0 628.9,737.0 640.0,745.5 648.0,760.0 653.0,777.6 674.8,760.0 706.1,748.0 740.0,737.0 787.0,674.0 824.0,636.0 843.0,601.0 880.0,570.0 950.0,570.0 950.0,1100.0 200.0,1100.0 200.0,621.0" fill="#0b6800"/>
<polygon points="280.0,674.0 313.3,673.9 363.0,676.0 408.2,680.0 453.4,691.0 498.6,701.0 543.8,715.0 560.0,721.0 591.3,735.0 615.0,767.0 638.0,785.0 644.8,805.7 668.6,787.0 706.1,770.0 740.0,757.0 787.0,698.0 834.7,635.6 870.0,600.0 950.0,600.0 950.0,1100.0 200.0,1100.0 200.0,674.0" fill="#009858"/>
<polygon points="280.0,737.0 300.9,737.2 329.1,728.1 385.6,723.6 430.8,724.0 476.0,731.0 521.2,741.0 555.1,752.0 575.0,761.0 601.8,783.0 620.0,815.0 638.2,837.0 664.4,820.0 706.1,806.0 740.0,783.0 787.0,720.0 826.9,664.3 860.0,630.0 950.0,630.0 950.0,1100.0 200.0,1100.0 200.0,737.0" fill="#00dcc8"/>
<polygon points="250.0,866.0 270.3,866.0 290.7,857.0 293.0,820.8 308.8,786.9 329.1,773.3 374.3,764.3 430.8,763.2 476.0,766.6 521.2,777.9 560.0,805.0 591.3,825.0 620.0,855.0 631.6,868.5 664.4,846.0 706.1,828.0 740.0,800.0 787.0,742.0 819.0,693.0 850.0,660.0 950.0,660.0 950.0,1100.0 200.0,1100.0 200.0,866.0" fill="#00bcfa"/>
<polygon points="250.0,876.0 268.3,876.7 295.8,881.2 325.6,869.8 346.3,849.2 360.0,840.0 385.6,814.0 430.8,807.2 476.0,807.2 521.2,816.3 566.4,849.0 591.3,864.0 612.2,882.0 623.0,900.7 643.5,884.0 660.0,880.0 700.0,863.5 727.0,845.0 760.0,805.0 790.0,757.0 811.2,732.0 840.0,700.0 950.0,700.0 950.0,1100.0 200.0,1100.0 200.0,876.0" fill="#0060ff"/>
<polygon points="250.0,894.0 272.9,895.0 307.3,899.6 353.1,895.0 376.0,890.4 410.4,865.2 444.8,849.2 490.6,849.2 536.5,862.0 575.0,886.0 591.3,900.0 605.2,916.0 614.8,937.5 654.0,911.0 680.0,899.0 720.0,868.0 768.8,842.0 790.0,810.0 803.4,776.4 830.0,740.0 950.0,740.0 950.0,1100.0 200.0,1100.0 200.0,894.0" fill="#0000ec"/>
<polygon points="250.0,908.0 275.2,908.8 318.8,906.5 364.6,901.9 410.4,908.8 444.8,904.2 467.7,892.7 502.1,895.0 536.5,906.0 570.8,937.0 598.3,968.0 606.6,982.5 641.0,950.0 680.0,925.0 720.0,894.0 768.8,860.0 795.6,831.0 830.0,790.0 950.0,790.0 950.0,1100.0 200.0,1100.0 200.0,908.0" fill="#2800bc"/>
<polygon points="300.0,924.8 314.2,924.8 353.1,920.2 410.4,931.7 456.3,940.8 490.6,940.8 525.0,945.4 552.5,963.7 566.3,998.1 570.0,1030.0 570.0,1100.0 200.0,1100.0 200.0,924.8" fill="#440088"/>
<path d="M343.0,502.0L375.2,510.9M343.0,502.0L335.8,541.0M343.0,502.0L366.5,547.5M375.2,510.9L407.4,519.8M375.2,510.9L366.5,547.5M375.2,510.9L401.5,551.6M407.4,519.8L439.5,528.7M407.4,519.8L401.5,551.6M407.4,519.8L431.8,562.5M439.5,528.7L471.7,537.6M439.5,528.7L431.8,562.5M439.5,528.7L464.0,565.0M471.7,537.6L503.9,546.5M471.7,537.6L464.0,565.0M471.7,537.6L501.0,573.9M503.9,546.5L536.1,555.5M503.9,546.5L501.0,573.9M503.9,546.5L530.7,579.8M536.1,555.5L568.3,564.4M536.1,555.5L530.7,579.8M536.1,555.5L564.7,585.1M568.3,564.4L600.5,573.3M568.3,564.4L564.7,585.1M568.3,564.4L594.7,594.1M600.5,573.3L632.6,582.2M600.5,573.3L594.7,594.1M600.5,573.3L629.9,599.2M632.6,582.2L664.8,591.1M632.6,582.2L629.9,599.2M632.6,582.2L663.3,605.8M664.8,591.1L697.0,600.0M664.8,591.1L663.3,605.8M664.8,591.1L694.3,612.0M697.0,600.0L694.3,612.0M335.8,541.0L366.5,547.5M335.8,541.0L329.1,573.5M335.8,541.0L364.4,577.0M366.5,547.5L401.5,551.6M366.5,547.5L364.4,577.0M366.5,547.5L395.1,583.3M401.5,551.6L431.8,562.5M401.5,551.6L395.1,583.3M401.5,551.6L427.0,588.8M431.8,562.5L464.0,565.0M431.8,562.5L427.0,588.8M431.8,562.5L459.2,594.8M464.0,565.0L501.0,573.9M464.0,565.0L459.2,594.8M464.0,565.0L495.3,596.4M501.0,573.9L530.7,579.8M501.0,573.9L495.3,596.4M501.0,573.9L526.1,602.1M530.7,579.8L564.7,585.1M530.7,579.8L526.1,602.1M530.7,579.8L557.1,610.2M564.7,585.1L594.7,594.1M564.7,585.1L557.1,610.2M564.7,585.1L591.7,611.4M594.7,594.1L629.9,599.2M594.7,594.1L591.7,611.4M594.7,594.1L625.7,616.6M629.9,599.2L663.3,605.8M629.9,599.2L625.7,616.6M629.9,599.2L659.8,621.6M663.3,605.8L694.3,612.0M663.3,605.8L659.8,621.6M663.3,605.8L690.6,628.0M694.3,612.0L690.6,628.0M329.1,573.5L364.4,577.0M329.1,573.5L322.0,606.0M329.1,573.5L352.8,608.2M364.4,577.0L395.1,583.3M364.4,577.0L352.8,608.2M364.4,577.0L387.5,613.3M395.1,583.3L427.0,588.8M395.1,583.3L387.5,613.3M395.1,583.3L423.4,618.2M427.0,588.8L459.2,594.8M427.0,588.8L423.4,618.2M427.0,588.8L453.7,618.5M459.2,594.8L495.3,596.4M459.2,594.8L453.7,618.5M459.2,594.8L485.9,627.1M495.3,596.4L526.1,602.1M495.3,596.4L485.9,627.1M495.3,596.4L520.5,629.3M526.1,602.1L557.1,610.2M526.1,602.1L520.5,629.3M526.1,602.1L551.6,629.8M557.1,610.2L591.7,611.4M557.1,610.2L551.6,629.8M557.1,610.2L588.7,636.3M591.7,611.4L625.7,616.6M591.7,611.4L588.7,636.3M591.7,611.4L619.1,638.6M625.7,616.6L659.8,621.6M625.7,616.6L619.1,638.6M625.7,616.6L651.1,641.6M659.8,621.6L690.6,628.0M659.8,621.6L651.1,641.6M659.8,621.6L686.3,647.0M690.6,628.0L686.3,647.0M322.0,606.0L352.8,608.2M322.0,606.0L317.8,640.0M322.0,606.0L348.5,644.2M352.8,608.2L387.5,613.3M352.8,608.2L348.5,644.2M352.8,608.2L383.8,643.0M387.5,613.3L423.4,618.2M387.5,613.3L383.8,643.0M387.5,613.3L418.2,645.8M423.4,618.2L453.7,618.5M423.4,618.2L418.2,645.8M423.4,618.2L447.9,650.3M453.7,618.5L485.9,627.1M453.7,618.5L447.9,650.3M453.7,618.5L485.2,649.9M485.9,627.1L520.5,629.3M485.9,627.1L485.2,649.9M485.9,627.1L517.8,653.2M520.5,629.3L551.6,629.8M520.5,629.3L517.8,653.2M520.5,629.3L547.3,654.8M551.6,629.8L588.7,636.3M551.6,629.8L547.3,654.8M551.6,629.8L581.4,660.8M588.7,636.3L619.1,638.6M588.7,636.3L581.4,660.8M588.7,636.3L615.5,663.9M619.1,638.6L651.1,641.6M619.1,638.6L615.5,663.9M619.1,638.6L647.2,663.6M651.1,641.6L686.3,647.0M651.1,641.6L647.2,663.6M651.1,641.6L681.7,667.0M686.3,647.0L681.7,667.0M317.8,640.0L348.5,644.2M317.8,640.0L311.9,672.6M317.8,640.0L343.8,676.6M348.5,644.2L383.8,643.0M348.5,644.2L343.8,676.6M348.5,644.2L380.4,675.0M383.8,643.0L418.2,645.8M383.8,643.0L380.4,675.0M383.8,643.0L411.0,676.4M418.2,645.8L447.9,650.3M418.2,645.8L411.0,676.4M418.2,645.8L445.7,676.6M447.9,650.3L485.2,649.9M447.9,650.3L445.7,676.6M447.9,650.3L475.4,680.0M485.2,649.9L517.8,653.2M485.2,649.9L475.4,680.0M485.2,649.9L509.5,683.8M517.8,653.2L547.3,654.8M517.8,653.2L509.5,683.8M517.8,653.2L545.1,683.9M547.3,654.8L581.4,660.8M547.3,654.8L545.1,683.9M547.3,654.8L577.8,686.2M581.4,660.8L615.5,663.9M581.4,660.8L577.8,686.2M581.4,660.8L611.6,689.0M615.5,663.9L647.2,663.6M615.5,663.9L611.6,689.0M615.5,663.9L641.6,689.0M647.2,663.6L681.7,667.0M647.2,663.6L641.6,689.0M647.2,663.6L676.5,690.0M681.7,667.0L676.5,690.0M311.9,672.6L343.8,676.6M311.9,672.6L306.0,705.0M311.9,672.6L337.3,705.6M343.8,676.6L380.4,675.0M343.8,676.6L337.3,705.6M343.8,676.6L373.7,708.8M380.4,675.0L411.0,676.4M380.4,675.0L373.7,708.8M380.4,675.0L406.8,705.4M411.0,676.4L445.7,676.6M411.0,676.4L406.8,705.4M411.0,676.4L437.9,707.0M445.7,676.6L475.4,680.0M445.7,676.6L437.9,707.0M445.7,676.6L474.3,707.8M475.4,680.0L509.5,683.8M475.4,680.0L474.3,707.8M475.4,680.0L503.7,709.7M509.5,683.8L545.1,683.9M509.5,683.8L503.7,709.7M509.5,683.8L535.9,713.2M545.1,683.9L577.8,686.2M545.1,683.9L535.9,713.2M545.1,683.9L572.0,710.6M577.8,686.2L611.6,689.0M577.8,686.2L572.0,710.6M577.8,686.2L604.4,711.1M611.6,689.0L641.6,689.0M611.6,689.0L604.4,711.1M611.6,689.0L638.2,712.7M641.6,689.0L676.5,690.0M641.6,689.0L638.2,712.7M641.6,689.0L670.8,715.0M676.5,690.0L670.8,715.0M306.0,705.0L337.3,705.6M306.0,705.0L299.8,739.0M306.0,705.0L330.6,737.6M337.3,705.6L373.7,708.8M337.3,705.6L330.6,737.6M337.3,705.6L366.3,740.8M373.7,708.8L406.8,705.4M373.7,708.8L366.3,740.8M373.7,708.8L398.2,741.4M406.8,705.4L437.9,707.0M406.8,705.4L398.2,741.4M406.8,705.4L431.4,739.3M437.9,707.0L474.3,707.8M437.9,707.0L431.4,739.3M437.9,707.0L464.4,741.2M474.3,707.8L503.7,709.7M474.3,707.8L464.4,741.2M474.3,707.8L500.5,740.4M503.7,709.7L535.9,713.2M503.7,709.7L500.5,740.4M503.7,709.7L529.4,743.1M535.9,713.2L572.0,710.6M535.9,713.2L529.4,743.1M535.9,713.2L566.9,745.4M572.0,710.6L604.4,711.1M572.0,710.6L566.9,745.4M572.0,710.6L598.7,741.7M604.4,711.1L638.2,712.7M604.4,711.1L598.7,741.7M604.4,711.1L632.3,745.4M638.2,712.7L670.8,715.0M638.2,712.7L632.3,745.4M638.2,712.7L663.9,745.0M670.8,715.0L663.9,745.0M299.8,739.0L330.6,737.6M299.8,739.0L292.2,772.0M299.8,739.0L323.5,772.5M330.6,737.6L366.3,740.8M330.6,737.6L323.5,772.5M330.6,737.6L356.1,774.8M366.3,740.8L398.2,741.4M366.3,740.8L356.1,774.8M366.3,740.8L392.5,775.4M398.2,741.4L431.4,739.3M398.2,741.4L392.5,775.4M398.2,741.4L425.8,773.4M431.4,739.3L464.4,741.2M431.4,739.3L425.8,773.4M431.4,739.3L459.1,773.9M464.4,741.2L500.5,740.4M464.4,741.2L459.1,773.9M464.4,741.2L488.9,775.3M500.5,740.4L529.4,743.1M500.5,740.4L488.9,775.3M500.5,740.4L523.8,775.4M529.4,743.1L566.9,745.4M529.4,743.1L523.8,775.4M529.4,743.1L557.4,777.6M566.9,745.4L598.7,741.7M566.9,745.4L557.4,777.6M566.9,745.4L588.7,778.3M598.7,741.7L632.3,745.4M598.7,741.7L588.7,778.3M598.7,741.7L622.4,779.5M632.3,745.4L663.9,745.0M632.3,745.4L622.4,779.5M632.3,745.4L656.2,779.0M663.9,745.0L656.2,779.0M292.2,772.0L323.5,772.5M292.2,772.0L284.3,806.0M292.2,772.0L316.3,808.2M323.5,772.5L356.1,774.8M323.5,772.5L316.3,808.2M323.5,772.5L350.0,807.7M356.1,774.8L392.5,775.4M356.1,774.8L350.0,807.7M356.1,774.8L384.4,808.3M392.5,775.4L425.8,773.4M392.5,775.4L384.4,808.3M392.5,775.4L415.4,811.3M425.8,773.4L459.1,773.9M425.8,773.4L415.4,811.3M425.8,773.4L447.7,808.8M459.1,773.9L488.9,775.3M459.1,773.9L447.7,808.8M459.1,773.9L483.0,808.0M488.9,775.3L523.8,775.4M488.9,775.3L483.0,808.0M488.9,775.3L514.1,812.6M523.8,775.4L557.4,777.6M523.8,775.4L514.1,812.6M523.8,775.4L550.3,812.5M557.4,777.6L588.7,778.3M557.4,777.6L550.3,812.5M557.4,777.6L584.0,813.8M588.7,778.3L622.4,779.5M588.7,778.3L584.0,813.8M588.7,778.3L614.1,814.0M622.4,779.5L656.2,779.0M622.4,779.5L614.1,814.0M622.4,779.5L648.2,814.0M656.2,779.0L648.2,814.0M284.3,806.0L316.3,808.2M284.3,806.0L263.7,846.5M284.3,806.0L296.9,848.8M316.3,808.2L350.0,807.7M316.3,808.2L296.9,848.8M316.3,808.2L331.2,846.9M350.0,807.7L384.4,808.3M350.0,807.7L331.2,846.9M350.0,807.7L367.7,850.6M384.4,808.3L415.4,811.3M384.4,808.3L367.7,850.6M384.4,808.3L401.1,851.0M415.4,811.3L447.7,808.8M415.4,811.3L401.1,851.0M415.4,811.3L435.3,851.5M447.7,808.8L483.0,808.0M447.7,808.8L435.3,851.5M447.7,808.8L468.3,850.6M483.0,808.0L514.1,812.6M483.0,808.0L468.3,850.6M483.0,808.0L502.3,855.4M514.1,812.6L550.3,812.5M514.1,812.6L502.3,855.4M514.1,812.6L537.0,856.4M550.3,812.5L584.0,813.8M550.3,812.5L537.0,856.4M550.3,812.5L570.0,857.8M584.0,813.8L614.1,814.0M584.0,813.8L570.0,857.8M584.0,813.8L602.1,858.8M614.1,814.0L648.2,814.0M614.1,814.0L602.1,858.8M614.1,814.0L638.1,858.0M648.2,814.0L638.1,858.0M263.7,846.5L296.9,848.8M263.7,846.5L268.2,872.0M263.7,846.5L300.2,873.0M296.9,848.8L331.2,846.9M296.9,848.8L300.2,873.0M296.9,848.8L334.1,877.8M331.2,846.9L367.7,850.6M331.2,846.9L334.1,877.8M331.2,846.9L365.8,882.8M367.7,850.6L401.1,851.0M367.7,850.6L365.8,882.8M367.7,850.6L397.0,884.6M401.1,851.0L435.3,851.5M401.1,851.0L397.0,884.6M401.1,851.0L431.1,887.1M435.3,851.5L468.3,850.6M435.3,851.5L431.1,887.1M435.3,851.5L464.1,888.2M468.3,850.6L502.3,855.4M468.3,850.6L464.1,888.2M468.3,850.6L496.9,894.8M502.3,855.4L537.0,856.4M502.3,855.4L496.9,894.8M502.3,855.4L527.8,893.6M537.0,856.4L570.0,857.8M537.0,856.4L527.8,893.6M537.0,856.4L559.9,898.8M570.0,857.8L602.1,858.8M570.0,857.8L559.9,898.8M570.0,857.8L597.1,899.7M602.1,858.8L638.1,858.0M602.1,858.8L597.1,899.7M602.1,858.8L627.4,905.0M638.1,858.0L627.4,905.0M268.2,872.0L300.2,873.0M268.2,872.0L272.3,895.0M268.2,872.0L306.0,900.6M300.2,873.0L334.1,877.8M300.2,873.0L306.0,900.6M300.2,873.0L332.9,905.5M334.1,877.8L365.8,882.8M334.1,877.8L332.9,905.5M334.1,877.8L364.6,912.4M365.8,882.8L397.0,884.6M365.8,882.8L364.6,912.4M365.8,882.8L397.5,915.8M397.0,884.6L431.1,887.1M397.0,884.6L397.5,915.8M397.0,884.6L427.3,924.1M431.1,887.1L464.1,888.2M431.1,887.1L427.3,924.1M431.1,887.1L461.1,927.4M464.1,888.2L496.9,894.8M464.1,888.2L461.1,927.4M464.1,888.2L490.6,934.4M496.9,894.8L527.8,893.6M496.9,894.8L490.6,934.4M496.9,894.8L524.6,936.5M527.8,893.6L559.9,898.8M527.8,893.6L524.6,936.5M527.8,893.6L551.8,943.4M559.9,898.8L597.1,899.7M559.9,898.8L551.8,943.4M559.9,898.8L584.8,947.4M597.1,899.7L627.4,905.0M597.1,899.7L584.8,947.4M597.1,899.7L616.0,955.0M627.4,905.0L616.0,955.0M272.3,895.0L306.0,900.6M272.3,895.0L276.4,917.9M272.3,895.0L306.9,923.5M306.0,900.6L332.9,905.5M306.0,900.6L306.9,923.5M306.0,900.6L337.4,928.7M332.9,905.5L364.6,912.4M332.9,905.5L337.4,928.7M332.9,905.5L367.5,935.8M364.6,912.4L397.5,915.8M364.6,912.4L367.5,935.8M364.6,912.4L397.3,944.2M397.5,915.8L427.3,924.1M397.5,915.8L397.3,944.2M397.5,915.8L427.1,952.6M427.3,924.1L461.1,927.4M427.3,924.1L427.1,952.6M427.3,924.1L456.9,961.0M461.1,927.4L490.6,934.4M461.1,927.4L456.9,961.0M461.1,927.4L486.7,969.4M490.6,934.4L524.6,936.5M490.6,934.4L486.7,969.4M490.6,934.4L516.3,978.8M524.6,936.5L551.8,943.4M524.6,936.5L516.3,978.8M524.6,936.5L545.3,989.6M551.8,943.4L584.8,947.4M551.8,943.4L545.3,989.6M551.8,943.4L574.0,1001.0M584.8,947.4L616.0,955.0M584.8,947.4L574.0,1001.0M584.8,947.4L603.0,1012.0M616.0,955.0L603.0,1012.0M276.4,917.9L306.9,923.5M306.9,923.5L337.4,928.7M337.4,928.7L367.5,935.8M367.5,935.8L397.3,944.2M397.3,944.2L427.1,952.6M427.1,952.6L456.9,961.0M456.9,961.0L486.7,969.4M486.7,969.4L516.3,978.8M516.3,978.8L545.3,989.6M545.3,989.6L574.0,1001.0M574.0,1001.0L603.0,1012.0M697.0,600.0L713.3,588.2M713.3,588.2L694.3,612.0M713.3,588.2L729.6,576.4M713.3,588.2L710.2,601.5M729.6,576.4L710.2,601.5M729.6,576.4L745.9,564.5M729.6,576.4L726.2,591.1M745.9,564.5L726.2,591.1M745.9,564.5L762.2,552.7M745.9,564.5L742.1,580.6M762.2,552.7L742.1,580.6M762.2,552.7L778.5,540.9M762.2,552.7L758.0,570.2M778.5,540.9L758.0,570.2M778.5,540.9L794.8,529.1M778.5,540.9L774.0,559.7M794.8,529.1L774.0,559.7M794.8,529.1L811.1,517.3M794.8,529.1L789.9,549.3M811.1,517.3L789.9,549.3M811.1,517.3L827.4,505.5M811.1,517.3L805.9,538.8M827.4,505.5L805.9,538.8M827.4,505.5L843.7,493.6M827.4,505.5L821.8,528.4M843.7,493.6L821.8,528.4M843.7,493.6L859.9,481.8M843.7,493.6L837.8,517.9M859.9,481.8L837.8,517.9M859.9,481.8L876.2,470.0M859.9,481.8L853.7,507.5M876.2,470.0L853.7,507.5M876.2,470.0L869.7,497.0M694.3,612.0L710.2,601.5M710.2,601.5L690.6,628.0M710.2,601.5L726.2,591.1M710.2,601.5L706.2,618.8M726.2,591.1L706.2,618.8M726.2,591.1L742.1,580.6M726.2,591.1L721.8,609.6M742.1,580.6L721.8,609.6M742.1,580.6L758.0,570.2M742.1,580.6L737.4,600.5M758.0,570.2L737.4,600.5M758.0,570.2L774.0,559.7M758.0,570.2L753.1,591.3M774.0,559.7L753.1,591.3M774.0,559.7L789.9,549.3M774.0,559.7L768.7,582.1M789.9,549.3L768.7,582.1M789.9,549.3L805.9,538.8M789.9,549.3L784.3,572.9M805.9,538.8L784.3,572.9M805.9,538.8L821.8,528.4M805.9,538.8L799.9,563.7M821.8,528.4L799.9,563.7M821.8,528.4L837.8,517.9M821.8,528.4L815.5,554.5M837.8,517.9L815.5,554.5M837.8,517.9L853.7,507.5M837.8,517.9L831.1,545.4M853.7,507.5L831.1,545.4M853.7,507.5L869.7,497.0M853.7,507.5L846.7,536.2M869.7,497.0L846.7,536.2M869.7,497.0L862.3,527.0M690.6,628.0L706.2,618.8M706.2,618.8L686.3,647.0M706.2,618.8L721.8,609.6M706.2,618.8L701.6,638.8M721.8,609.6L701.6,638.8M721.8,609.6L737.4,600.5M721.8,609.6L717.0,630.6M737.4,600.5L717.0,630.6M737.4,600.5L753.1,591.3M737.4,600.5L732.3,622.5M753.1,591.3L732.3,622.5M753.1,591.3L768.7,582.1M753.1,591.3L747.6,614.3M768.7,582.1L747.6,614.3M768.7,582.1L784.3,572.9M768.7,582.1L763.0,606.1M784.3,572.9L763.0,606.1M784.3,572.9L799.9,563.7M784.3,572.9L778.3,597.9M799.9,563.7L778.3,597.9M799.9,563.7L815.5,554.5M799.9,563.7L793.7,589.7M815.5,554.5L793.7,589.7M815.5,554.5L831.1,545.4M815.5,554.5L809.0,581.5M831.1,545.4L809.0,581.5M831.1,545.4L846.7,536.2M831.1,545.4L824.3,573.4M846.7,536.2L824.3,573.4M846.7,536.2L862.3,527.0M846.7,536.2L839.7,565.2M862.3,527.0L839.7,565.2M862.3,527.0L855.0,557.0M686.3,647.0L701.6,638.8M701.6,638.8L681.7,667.0M701.6,638.8L717.0,630.6M701.6,638.8L696.7,660.0M717.0,630.6L696.7,660.0M717.0,630.6L732.3,622.5M717.0,630.6L711.6,653.0M732.3,622.5L711.6,653.0M732.3,622.5L747.6,614.3M732.3,622.5L726.6,646.0M747.6,614.3L726.6,646.0M747.6,614.3L763.0,606.1M747.6,614.3L741.5,639.0M763.0,606.1L741.5,639.0M763.0,606.1L778.3,597.9M763.0,606.1L756.5,632.0M778.3,597.9L756.5,632.0M778.3,597.9L793.7,589.7M778.3,597.9L771.5,625.0M793.7,589.7L771.5,625.0M793.7,589.7L809.0,581.5M793.7,589.7L786.4,618.0M809.0,581.5L786.4,618.0M809.0,581.5L824.3,573.4M809.0,581.5L801.4,611.0M824.3,573.4L801.4,611.0M824.3,573.4L839.7,565.2M824.3,573.4L816.3,604.0M839.7,565.2L816.3,604.0M839.7,565.2L855.0,557.0M839.7,565.2L831.3,597.0M855.0,557.0L831.3,597.0M855.0,557.0L846.2,590.0M681.7,667.0L696.7,660.0M696.7,660.0L676.5,690.0M696.7,660.0L711.6,653.0M696.7,660.0L691.1,683.8M711.6,653.0L691.1,683.8M711.6,653.0L726.6,646.0M711.6,653.0L705.8,677.6M726.6,646.0L705.8,677.6M726.6,646.0L741.5,639.0M726.6,646.0L720.4,671.5M741.5,639.0L720.4,671.5M741.5,639.0L756.5,632.0M741.5,639.0L735.1,665.3M756.5,632.0L735.1,665.3M756.5,632.0L771.5,625.0M756.5,632.0L749.7,659.1M771.5,625.0L749.7,659.1M771.5,625.0L786.4,618.0M771.5,625.0L764.4,652.9M786.4,618.0L764.4,652.9M786.4,618.0L801.4,611.0M786.4,618.0L779.0,646.7M801.4,611.0L779.0,646.7M801.4,611.0L816.3,604.0M801.4,611.0L793.7,640.5M816.3,604.0L793.7,640.5M816.3,604.0L831.3,597.0M816.3,604.0L808.3,634.4M831.3,597.0L808.3,634.4M831.3,597.0L846.2,590.0M831.3,597.0L823.0,628.2M846.2,590.0L823.0,628.2M846.2,590.0L837.7,622.0M676.5,690.0L691.1,683.8M691.1,683.8L670.8,715.0M691.1,683.8L705.8,677.6M691.1,683.8L685.1,709.5M705.8,677.6L685.1,709.5M705.8,677.6L720.4,671.5M705.8,677.6L699.5,704.1M720.4,671.5L699.5,704.1M720.4,671.5L735.1,665.3M720.4,671.5L713.8,698.6M735.1,665.3L713.8,698.6M735.1,665.3L749.7,659.1M735.1,665.3L728.2,693.2M749.7,659.1L728.2,693.2M749.7,659.1L764.4,652.9M749.7,659.1L742.5,687.7M764.4,652.9L742.5,687.7M764.4,652.9L779.0,646.7M764.4,652.9L756.9,682.3M779.0,646.7L756.9,682.3M779.0,646.7L793.7,640.5M779.0,646.7L771.3,676.8M793.7,640.5L771.3,676.8M793.7,640.5L808.3,634.4M793.7,640.5L785.6,671.4M808.3,634.4L785.6,671.4M808.3,634.4L823.0,628.2M808.3,634.4L800.0,665.9M823.0,628.2L800.0,665.9M823.0,628.2L837.7,622.0M823.0,628.2L814.3,660.5M837.7,622.0L814.3,660.5M837.7,622.0L828.7,655.0M670.8,715.0L685.1,709.5M685.1,709.5L663.9,745.0M685.1,709.5L699.5,704.1M685.1,709.5L678.0,740.0M699.5,704.1L678.0,740.0M699.5,704.1L713.8,698.6M699.5,704.1L692.1,735.0M713.8,698.6L692.1,735.0M713.8,698.6L728.2,693.2M713.8,698.6L706.2,730.0M728.2,693.2L706.2,730.0M728.2,693.2L742.5,687.7M728.2,693.2L720.4,725.0M742.5,687.7L720.4,725.0M742.5,687.7L756.9,682.3M742.5,687.7L734.5,720.0M756.9,682.3L734.5,720.0M756.9,682.3L771.3,676.8M756.9,682.3L748.6,715.0M771.3,676.8L748.6,715.0M771.3,676.8L785.6,671.4M771.3,676.8L762.7,710.0M785.6,671.4L762.7,710.0M785.6,671.4L800.0,665.9M785.6,671.4L776.8,705.0M800.0,665.9L776.8,705.0M800.0,665.9L814.3,660.5M800.0,665.9L790.9,700.0M814.3,660.5L790.9,700.0M814.3,660.5L828.7,655.0M814.3,660.5L805.0,695.0M828.7,655.0L805.0,695.0M828.7,655.0L819.1,690.0M663.9,745.0L678.0,740.0M678.0,740.0L656.2,779.0M678.0,740.0L692.1,735.0M678.0,740.0L670.3,774.4M692.1,735.0L670.3,774.4M692.1,735.0L706.2,730.0M692.1,735.0L684.5,769.7M706.2,730.0L684.5,769.7M706.2,730.0L720.4,725.0M706.2,730.0L698.6,765.1M720.4,725.0L698.6,765.1M720.4,725.0L734.5,720.0M720.4,725.0L712.7,760.5M734.5,720.0L712.7,760.5M734.5,720.0L748.6,715.0M734.5,720.0L726.9,755.8M748.6,715.0L726.9,755.8M748.6,715.0L762.7,710.0M748.6,715.0L741.0,751.2M762.7,710.0L741.0,751.2M762.7,710.0L776.8,705.0M762.7,710.0L755.2,746.5M776.8,705.0L755.2,746.5M776.8,705.0L790.9,700.0M776.8,705.0L769.3,741.9M790.9,700.0L769.3,741.9M790.9,700.0L805.0,695.0M790.9,700.0L783.5,737.3M805.0,695.0L783.5,737.3M805.0,695.0L819.1,690.0M805.0,695.0L797.6,732.6M819.1,690.0L797.6,732.6M819.1,690.0L811.8,728.0M656.2,779.0L670.3,774.4M670.3,774.4L648.2,814.0M670.3,774.4L684.5,769.7M670.3,774.4L662.4,809.5M684.5,769.7L662.4,809.5M684.5,769.7L698.6,765.1M684.5,769.7L676.7,805.1M698.6,765.1L676.7,805.1M698.6,765.1L712.7,760.5M698.6,765.1L690.9,800.6M712.7,760.5L690.9,800.6M712.7,760.5L726.9,755.8M712.7,760.5L705.1,796.2M726.9,755.8L705.1,796.2M726.9,755.8L741.0,751.2M726.9,755.8L719.4,791.7M741.0,751.2L719.4,791.7M741.0,751.2L755.2,746.5M741.0,751.2L733.6,787.3M755.2,746.5L733.6,787.3M755.2,746.5L769.3,741.9M755.2,746.5L747.9,782.8M769.3,741.9L747.9,782.8M769.3,741.9L783.5,737.3M769.3,741.9L762.1,778.4M783.5,737.3L762.1,778.4M783.5,737.3L797.6,732.6M783.5,737.3L776.4,773.9M797.6,732.6L776.4,773.9M797.6,732.6L811.8,728.0M797.6,732.6L790.6,769.5M811.8,728.0L790.6,769.5M811.8,728.0L804.8,765.0M648.2,814.0L662.4,809.5M662.4,809.5L638.1,858.0M662.4,809.5L676.7,805.1M662.4,809.5L652.8,852.7M676.7,805.1L652.8,852.7M676.7,805.1L690.9,800.6M676.7,805.1L667.4,847.5M690.9,800.6L667.4,847.5M690.9,800.6L705.1,796.2M690.9,800.6L682.0,842.2M705.1,796.2L682.0,842.2M705.1,796.2L719.4,791.7M705.1,796.2L696.6,836.9M719.4,791.7L696.6,836.9M719.4,791.7L733.6,787.3M719.4,791.7L711.3,831.6M733.6,787.3L711.3,831.6M733.6,787.3L747.9,782.8M733.6,787.3L725.9,826.4M747.9,782.8L725.9,826.4M747.9,782.8L762.1,778.4M747.9,782.8L740.5,821.1M762.1,778.4L740.5,821.1M762.1,778.4L776.4,773.9M762.1,778.4L755.2,815.8M776.4,773.9L755.2,815.8M776.4,773.9L790.6,769.5M776.4,773.9L769.8,810.5M790.6,769.5L769.8,810.5M790.6,769.5L804.8,765.0M790.6,769.5L784.4,805.3M804.8,765.0L784.4,805.3M804.8,765.0L799.0,800.0M638.1,858.0L652.8,852.7M652.8,852.7L627.4,905.0M652.8,852.7L667.4,847.5M652.8,852.7L642.7,897.5M667.4,847.5L642.7,897.5M667.4,847.5L682.0,842.2M667.4,847.5L658.0,889.9M682.0,842.2L658.0,889.9M682.0,842.2L696.6,836.9M682.0,842.2L673.3,882.4M696.6,836.9L673.3,882.4M696.6,836.9L711.3,831.6M696.6,836.9L688.5,874.8M711.3,831.6L688.5,874.8M711.3,831.6L725.9,826.4M711.3,831.6L703.8,867.3M725.9,826.4L703.8,867.3M725.9,826.4L740.5,821.1M725.9,826.4L719.1,859.7M740.5,821.1L719.1,859.7M740.5,821.1L755.2,815.8M740.5,821.1L734.4,852.2M755.2,815.8L734.4,852.2M755.2,815.8L769.8,810.5M755.2,815.8L749.7,844.6M769.8,810.5L749.7,844.6M769.8,810.5L784.4,805.3M769.8,810.5L764.9,837.1M784.4,805.3L764.9,837.1M784.4,805.3L799.0,800.0M784.4,805.3L780.2,829.5M799.0,800.0L780.2,829.5M799.0,800.0L795.5,822.0M627.4,905.0L642.7,897.5M642.7,897.5L616.0,955.0M642.7,897.5L658.0,889.9M642.7,897.5L632.2,944.4M658.0,889.9L632.2,944.4M658.0,889.9L673.3,882.4M658.0,889.9L648.4,933.7M673.3,882.4L648.4,933.7M673.3,882.4L688.5,874.8M673.3,882.4L664.6,923.1M688.5,874.8L664.6,923.1M688.5,874.8L703.8,867.3M688.5,874.8L680.8,912.5M703.8,867.3L680.8,912.5M703.8,867.3L719.1,859.7M703.8,867.3L697.1,901.8M719.1,859.7L697.1,901.8M719.1,859.7L734.4,852.2M719.1,859.7L713.3,891.2M734.4,852.2L713.3,891.2M734.4,852.2L749.7,844.6M734.4,852.2L729.5,880.5M749.7,844.6L729.5,880.5M749.7,844.6L764.9,837.1M749.7,844.6L745.7,869.9M764.9,837.1L745.7,869.9M764.9,837.1L780.2,829.5M764.9,837.1L761.9,859.3M780.2,829.5L761.9,859.3M780.2,829.5L795.5,822.0M780.2,829.5L778.1,848.6M795.5,822.0L778.1,848.6M795.5,822.0L794.3,838.0M616.0,955.0L632.2,944.4M632.2,944.4L603.0,1012.0M632.2,944.4L648.4,933.7M632.2,944.4L620.3,997.2M648.4,933.7L620.3,997.2M648.4,933.7L664.6,923.1M648.4,933.7L637.6,982.4M664.6,923.1L637.6,982.4M664.6,923.1L680.8,912.5M664.6,923.1L655.0,967.5M680.8,912.5L655.0,967.5M680.8,912.5L697.1,901.8M680.8,912.5L672.3,952.7M697.1,901.8L672.3,952.7M697.1,901.8L713.3,891.2M697.1,901.8L689.6,937.9M713.3,891.2L689.6,937.9M713.3,891.2L729.5,880.5M713.3,891.2L706.9,923.1M729.5,880.5L706.9,923.1M729.5,880.5L745.7,869.9M729.5,880.5L724.2,908.3M745.7,869.9L724.2,908.3M745.7,869.9L761.9,859.3M745.7,869.9L741.5,893.5M761.9,859.3L741.5,893.5M761.9,859.3L778.1,848.6M761.9,859.3L758.9,878.6M778.1,848.6L758.9,878.6M778.1,848.6L794.3,838.0M778.1,848.6L776.2,863.8M794.3,838.0L776.2,863.8M794.3,838.0L793.5,849.0M603.0,1012.0L620.3,997.2M620.3,997.2L637.6,982.4M637.6,982.4L655.0,967.5M655.0,967.5L672.3,952.7M672.3,952.7L689.6,937.9M689.6,937.9L706.9,923.1M706.9,923.1L724.2,908.3M724.2,908.3L741.5,893.5M741.5,893.5L758.9,878.6M758.9,878.6L776.2,863.8M776.2,863.8L793.5,849.0M600.9,352.7L588.6,364.0M674.2,417.8L667.5,416.0M721.1,349.4L735.9,357.2M471.7,537.6L503.9,546.5M755.1,488.1L752.9,482.7M503.9,546.5L536.1,555.5M574.9,435.6L579.7,438.8M723.9,496.9L718.0,498.7M569.2,356.2L578.5,353.8M668.2,395.6L678.7,399.2M611.0,485.0L612.5,479.0M840.4,449.4L822.0,445.5M621.9,551.6L590.2,549.6M472.5,447.8L491.4,457.6M692.2,425.2L694.0,431.5M647.1,392.2L653.1,398.5M692.6,404.7L701.5,405.5M554.7,429.5L548.9,422.8M737.2,434.7L731.4,432.6M780.0,466.0L773.3,455.3M634.0,398.1L627.8,407.1M757.1,470.2L758.6,480.4M595.8,427.3L596.5,437.2M613.9,440.8L614.7,434.1M603.2,328.6L597.1,328.7M478.3,379.0L495.4,370.3M721.1,349.4L714.8,372.9M690.1,452.2L695.1,454.8M567.9,325.0L570.4,332.4M708.2,422.4L703.9,415.8M690.1,505.7L707.1,506.4M605.9,289.2L608.6,322.2M561.8,331.5L550.9,320.0M764.6,502.0L770.7,504.3M582.0,479.2L586.7,488.6M508.3,397.8L504.7,403.3M504.7,403.3L509.8,422.2M682.9,438.2L677.0,434.2M677.0,434.2L677.1,427.9M539.7,341.7L553.3,332.7M690.1,452.2L696.7,448.5M585.2,320.2L575.2,324.7M672.0,445.4L675.0,439.7M570.4,332.4L570.2,342.8M656.3,403.1L660.9,408.2M636.5,517.3L639.4,540.7M594.1,467.8L602.3,467.3M602.7,394.8L609.4,397.7M764.2,470.8L763.2,477.1M854.7,419.3L862.7,447.6M666.7,427.1L660.6,422.4M647.6,413.8L640.4,419.3M628.6,301.1L621.1,322.2M621.8,461.8L627.4,465.7M678.2,359.7L676.7,377.1M778.1,481.0L779.9,473.9M504.7,403.3L501.0,396.1M678.2,359.7L692.0,350.6M551.8,489.3L562.1,492.5M668.8,562.4L647.0,565.6M714.1,431.0L703.0,430.1M677.0,434.2L675.0,439.7M604.1,422.5L606.5,412.6M636.2,373.1L643.4,384.0M821.6,402.0L817.0,419.6M584.6,304.0L557.8,307.5M717.6,441.8L721.0,446.4M609.4,397.7L614.9,392.5M602.3,467.3L605.4,472.8M677.0,487.2L672.4,495.0M423.9,467.9L407.6,489.4M772.5,481.7L778.1,481.0M711.9,547.4L694.2,545.3M561.5,396.9L571.3,399.2M567.1,372.6L575.7,379.8M466.8,499.1L465.6,480.4M709.1,442.8L713.2,449.5M575.2,313.9L575.2,324.7M678.1,514.8L675.8,505.3M694.4,398.5L701.8,398.6M563.1,386.9L561.5,396.9M872.0,470.0L859.9,481.8M729.4,515.8L717.4,525.3M647.1,392.2L640.1,395.0M574.3,416.2L582.9,413.3M517.4,442.4L519.2,429.8M734.3,449.7L741.5,447.4M602.2,429.6L596.5,437.2M711.4,415.2L707.3,406.2M681.8,424.7L680.9,419.0M829.3,431.3L817.0,419.6M764.1,371.9L751.3,378.1M764.2,470.8L770.9,465.4M521.3,408.3L538.8,414.1M747.0,473.1L757.1,470.2M557.3,450.6L549.3,462.1M503.9,546.5L525.2,536.2M762.2,552.7L751.3,527.4M649.8,459.6L644.3,458.2M472.5,447.8L476.9,421.5M560.8,479.5L566.2,467.4M681.8,424.7L685.8,433.4M495.8,377.7L501.8,374.8M515.0,378.3L508.1,375.9M750.1,364.6L764.1,371.9M727.7,450.7L721.0,446.4M667.7,452.5L677.3,451.1M612.9,414.7L606.5,412.6M673.6,387.7L668.2,395.6M579.4,445.8L569.6,441.6M577.7,405.3L588.1,407.4M742.6,500.9L737.4,498.4M680.3,393.7L684.8,399.1M568.3,564.4L600.5,573.3M713.3,480.0L709.6,471.8M615.3,399.8L618.9,404.9M487.9,394.9L491.6,387.1M633.9,407.8L639.6,400.6M716.7,390.0L714.3,399.6M713.0,407.1L721.0,404.7M657.8,369.9L647.8,352.2M812.6,488.9L828.7,484.7M614.9,392.5L623.8,387.4M527.6,421.8L521.3,408.3M762.7,464.7L764.2,470.8M676.7,377.1L690.1,381.2M595.7,406.8L602.2,400.9M615.3,399.8L623.2,401.2M759.7,412.7L752.6,403.2M717.4,525.3L711.8,515.3M711.4,495.7L717.8,489.9M584.8,466.3L585.9,457.7M751.3,527.4L745.7,518.8M557.3,450.6L565.9,450.0M747.4,392.8L741.6,404.3M632.3,335.1L649.6,331.7M525.8,295.4L539.7,327.9M618.0,421.8L618.0,429.0M604.1,422.5L598.8,415.2M517.4,442.4L518.4,456.3M802.0,411.5L817.0,419.6M727.5,502.0L730.4,508.0M745.2,479.6L752.9,482.7M484.5,387.5L491.6,387.1M569.6,441.6L574.9,435.6M661.9,415.7L667.5,416.0M634.9,443.6L640.0,438.8M667.7,452.5L664.8,442.4M606.8,380.8L616.7,380.2M650.2,447.0L652.8,452.9M584.5,423.7L586.8,429.7M745.9,564.5L729.4,540.0M741.6,404.3L737.6,388.8M646.3,399.0L647.1,392.2M538.8,414.1L548.9,422.8M577.9,508.2L588.5,503.2M558.8,353.9L562.2,346.4M544.6,382.7L549.5,392.8M802.9,430.8L802.0,411.5M596.1,348.2L586.8,353.6M585.9,457.7L592.4,462.4M674.2,417.8L673.0,424.0M780.0,466.0L773.1,473.9M596.1,348.2L601.4,338.5M753.8,515.0L745.7,518.8M560.8,479.5L562.1,492.5M837.6,410.4L854.7,419.3M597.1,328.7L590.3,330.5M658.9,466.3L666.7,466.1M731.1,466.2L722.5,466.9M682.7,459.1L682.6,453.1M729.6,576.4L745.9,564.5M767.5,491.4L772.2,487.5M460.9,418.3L430.0,407.4M550.7,526.7L571.3,521.5M701.8,398.6L701.7,390.0M567.6,432.2L574.9,435.6M530.8,516.6L509.2,507.3M745.9,564.5L762.2,552.7M460.9,418.3L454.0,436.3M481.5,403.1L491.3,399.9M618.4,466.4L624.2,472.2M582.0,479.2L589.8,474.1M496.8,430.8L476.9,421.5M781.2,441.6L774.8,430.2M736.7,507.6L729.4,515.8M578.1,392.4L586.1,386.3M471.7,537.6L487.9,505.2M630.7,432.5L623.4,424.8M669.2,482.3L665.4,488.1M829.2,462.5L822.0,445.5M518.4,394.3L519.2,384.2M634.5,506.7L632.3,499.0M407.4,519.8L433.6,496.1M778.3,495.4L770.0,497.2M513.2,388.7L515.0,378.3M784.4,454.8L773.3,455.3M641.5,406.0L639.6,400.6M581.4,339.0L576.1,335.2M502.3,381.2L501.7,390.3M565.0,508.2L571.3,521.5M639.3,471.1L644.6,465.2M556.9,405.0L550.4,414.3M672.6,533.2L659.4,524.3M700.9,382.2L690.1,381.2M592.0,432.1L586.8,429.7M664.2,460.7L658.5,459.7M738.6,413.6L728.8,403.3M672.4,495.0L681.6,497.7M692.9,367.6L676.7,377.1M439.5,528.7L466.8,499.1M693.1,487.0L689.6,496.0M618.0,421.8L622.5,417.0M737.2,434.7L738.3,441.2M686.9,469.7L695.8,462.5M589.8,474.1L580.1,473.0M692.9,367.6L692.0,350.6M623.2,401.2L622.0,410.0M702.3,516.7L702.2,532.2M595.7,444.0L592.5,450.2M600.1,461.2L602.3,467.3M636.0,386.2L627.6,378.9M466.8,499.1L433.6,496.1M664.2,460.7L667.7,452.5M616.8,339.3L603.6,344.6M651.0,469.0L655.0,477.8M677.3,451.1L682.6,453.1M700.1,411.0L703.9,415.8M716.0,505.3L711.8,515.3M638.4,457.3L635.1,451.6M525.8,347.0L515.0,370.1M578.5,353.8L582.2,346.3M576.1,335.2L580.0,328.4M873.2,429.0L884.7,435.0M712.2,456.5L720.6,459.4M561.8,331.5L553.3,332.7M779.5,415.4L775.5,397.5M778.5,540.9L788.3,515.8M748.3,453.8L752.8,446.4M562.2,346.4L570.2,342.8M747.0,473.1L745.2,479.6M751.6,494.4L748.1,486.8M629.2,412.5L622.0,410.0M636.0,386.2L623.8,387.4M658.4,447.7L650.2,447.0M697.5,471.0L703.2,463.3M646.3,399.0L640.1,395.0M622.5,417.0L623.4,424.8M539.1,476.6L526.7,482.6M517.4,442.4L505.1,454.0M605.9,289.2L584.6,304.0M698.0,426.6L692.2,425.2M549.1,453.6L557.3,450.6M748.1,486.8L738.9,483.5M672.4,495.0L675.8,505.3M602.7,394.8L596.8,388.6M628.6,301.1L608.6,322.2M618.4,466.4L609.7,465.9M602.2,400.9L609.4,403.3M714.1,431.0L706.6,435.3M557.3,450.6L546.6,446.0M717.6,441.8L713.2,449.5M645.9,375.6L656.2,378.7M731.1,466.2L743.2,467.7M513.2,388.7L518.4,394.3M600.1,461.2L609.7,465.9M754.6,434.4L752.8,446.4M633.9,407.8L633.7,417.8M752.8,446.4L741.5,447.4M594.1,467.8L584.8,466.3M640.3,413.1L647.6,413.8M521.3,408.3L515.9,400.4M556.9,405.0L549.5,392.8M744.9,438.2L738.3,441.2M668.8,562.4L697.9,567.4M586.7,488.6L575.2,484.5M693.7,392.3L684.8,399.1M579.1,465.2L580.1,473.0M686.9,469.7L680.5,475.3M650.6,428.2L659.7,428.0M534.0,458.7L518.4,456.3M641.5,406.0L647.3,405.5M692.2,425.2L693.9,419.3M747.4,392.8L760.0,395.8M773.2,515.8L776.6,505.6M563.9,444.2L567.6,432.2M761.3,511.3L766.4,508.9M711.4,415.2L713.9,424.4M686.9,469.7L679.2,467.0M702.2,457.4L702.3,450.7M811.1,517.3L788.3,515.8M767.6,523.1L761.3,511.3M642.6,485.5L652.3,487.4M533.8,446.4L546.6,446.0M487.9,505.2L508.0,525.4M682.9,438.2L678.1,444.8M794.4,489.1L792.7,498.9M685.8,415.8L680.9,419.0M580.1,473.0L572.6,476.4M672.6,533.2L678.1,514.8M614.7,434.1L620.2,439.1M781.2,441.6L765.7,435.7M802.9,430.8L817.0,419.6M484.3,475.3L465.6,480.4M741.6,420.4L753.1,419.7M637.6,477.2L634.7,484.1M587.8,436.0L586.8,429.7M734.5,422.5L741.6,420.4M521.7,379.0L515.0,378.3M517.4,442.4L496.8,430.8M598.8,415.2L593.6,412.9M646.3,399.0L641.5,406.0M507.3,358.4L495.4,370.3M703.9,486.1L710.0,485.7M557.8,307.5L567.9,325.0M770.0,497.2L772.2,487.5M726.4,410.8L726.6,418.1M459.4,396.4L472.3,393.4M624.4,350.7L600.9,352.7M600.1,461.2L603.0,455.5M728.8,403.3L741.6,404.3M410.5,395.4L430.0,407.4M792.1,386.6L788.9,403.1M719.8,482.5L717.8,489.9M644.3,458.2L641.7,450.3M694.4,398.5L701.5,405.5M731.1,466.2L740.7,460.5M754.6,434.4L765.7,435.7M472.5,447.8L446.7,464.5M586.8,353.6L582.2,346.3M642.6,485.5L646.5,491.7M525.8,347.0L539.7,341.7M709.1,442.8L713.1,437.3M613.9,440.8L608.4,442.7M588.5,503.2L594.3,496.2M541.9,359.4L515.0,370.1M670.7,323.1L666.8,343.0M595.3,484.0L589.8,474.1M618.4,466.4L612.6,472.1M487.0,329.0L506.4,312.2M734.3,449.7L731.2,440.0M665.1,380.3L656.2,378.7M707.9,466.4L709.6,471.8M478.3,379.0L484.5,387.5M644.6,444.0L641.7,450.3M554.7,429.5L565.3,424.9M770.0,407.7L769.6,419.1M690.1,505.7L681.6,497.7M622.2,508.4L623.7,498.3M690.6,437.1L688.1,446.8M570.6,460.9L565.9,450.0M760.4,456.1L755.4,464.0M783.4,502.1L776.6,505.6M670.6,436.3L675.0,439.7M568.3,564.4L590.2,549.6M664.1,510.0L675.8,505.3M727.5,502.0L731.8,498.2M767.5,491.4L770.0,497.2M564.3,418.0L570.1,420.7M690.1,452.2L688.1,446.8M614.7,434.1L607.3,435.2M647.1,392.2L656.1,392.4M694.2,545.3L702.2,532.2M707.9,466.4L703.2,463.3M700.1,411.0L692.1,411.6M794.5,473.7L779.9,473.9M557.8,307.5L575.2,313.9M654.2,434.8L659.7,428.0M707.7,395.6L714.3,399.6M728.8,403.3L737.6,388.8M605.1,505.2L604.8,494.4M600.8,449.5L601.2,440.6M717.4,525.3L702.2,532.2M721.0,446.4L727.1,445.2M590.3,330.5L585.1,332.8M650.6,428.2L645.7,433.7M726.8,389.3L722.5,396.5M548.8,437.3L546.6,446.0M676.7,377.1L665.1,380.3M604.8,494.4L603.6,487.4M567.6,432.2L572.0,426.6M733.5,378.3L751.3,378.1M508.3,397.8L513.2,388.7M569.2,356.2L558.8,353.9M487.9,505.2L466.8,499.1M550.7,526.7L530.8,516.6M579.1,465.2L585.9,457.7M588.0,345.0L586.8,353.6M679.2,467.0L688.5,461.0M657.8,369.9L656.2,378.7M806.4,449.0L802.9,430.8M682.8,482.9L675.5,479.1M761.3,445.3L754.6,434.4M628.9,458.3L635.0,465.9M788.9,403.1L802.0,411.5M655.2,414.4L661.9,415.7M632.6,489.3L634.7,484.1M579.7,438.8L587.8,436.0M660.9,493.9L665.4,488.1M688.8,332.6L705.5,341.3M618.0,429.0L625.6,434.8M652.3,487.4L647.3,481.5M676.7,377.1L682.2,386.4M610.4,430.2L607.3,435.2M634.9,443.6L628.8,449.4M690.1,505.7L689.6,496.0M505.1,454.0L486.7,443.5M602.7,407.9L606.5,412.6M439.5,528.7L471.7,537.6M759.7,412.7L747.2,412.7M707.1,359.5L692.0,350.6M704.7,477.5L709.6,471.8M587.2,338.3L590.3,330.5M594.4,399.9L602.2,400.9M634.0,398.1L640.1,395.0M814.1,474.9L803.5,483.9M759.7,412.7L769.6,419.1M624.4,350.7L647.8,352.2M540.8,429.6L538.8,414.1M600.5,573.3L621.9,551.6M672.4,495.0L665.4,488.1M734.3,449.7L727.7,450.7M521.3,408.3L509.8,422.2M639.1,491.4L646.5,491.7M599.0,471.9L605.4,472.8M557.2,471.2L550.1,478.4M748.3,453.8L760.4,456.1M854.7,419.3L840.4,449.4M814.1,474.9L812.6,488.9M599.0,471.9L589.8,474.1M765.2,483.6L772.2,487.5M805.3,504.5L792.7,498.9M655.2,414.4L647.6,413.8M693.7,392.3L700.9,382.2M626.0,396.3L620.3,394.7M536.1,555.5L550.7,526.7M627.6,440.8L623.0,445.0M760.0,395.8L770.0,407.7M604.8,494.4L594.3,496.2M733.5,378.3L726.8,389.3M629.2,412.5L633.7,417.8M714.8,372.9L710.5,382.1M698.0,426.6L703.0,430.1M618.0,421.8L610.9,423.7M613.9,440.8L611.4,447.8M589.7,441.5L584.6,448.6M631.7,478.4L637.6,477.2M585.2,320.2L585.6,326.5M654.7,506.1L664.5,501.6M723.3,438.4L727.1,445.2M638.4,457.3L641.7,450.3M613.9,440.8L623.0,445.0M733.4,480.6L724.7,478.8M780.0,466.0L770.9,465.4M658.4,447.7L655.7,442.0M515.9,400.4L523.8,398.3M764.2,470.8L757.1,470.2M600.9,352.7L596.1,348.2M635.0,465.9L632.0,471.5M778.0,379.2L792.1,386.6M727.7,450.7L735.3,456.7M530.8,516.6L546.3,503.8M792.1,386.6L806.5,394.1M612.6,472.1L612.5,479.0M632.6,582.2L664.8,591.1M508.3,397.8L518.4,394.3M680.5,475.3L675.5,479.1M654.2,434.8L645.7,433.7M664.8,591.1L697.0,600.0M563.1,386.9L549.5,392.8M623.8,387.4L632.2,391.3M592.0,432.1L596.5,437.2M599.0,471.9L594.1,467.8M775.5,397.5L770.0,407.7M627.6,440.8L628.8,449.4M681.8,424.7L688.1,421.1M696.8,479.2L703.4,472.0M692.6,404.7L686.4,410.1M814.1,474.9L794.5,473.7M747.0,473.1L752.4,476.0M621.1,322.2L616.8,339.3M596.1,348.2L603.6,344.6M794.8,529.1L788.3,515.8M623.2,401.2L620.3,394.7M612.9,414.7L622.5,417.0M375.2,510.9L382.9,484.0M634.7,484.1L639.1,491.4M659.7,483.1L660.9,493.9M762.7,464.7L773.3,455.3M736.7,507.6L737.3,516.8M634.3,428.1L629.9,421.9M634.5,506.7L644.5,508.1M697.3,498.7L707.1,506.4M554.2,443.0L548.8,437.3M800.7,463.0L794.5,473.7M650.8,312.7L649.6,331.7M622.2,508.4L608.3,519.6M704.7,477.5L713.3,480.0M685.8,415.8L679.3,411.0M647.8,352.2L649.6,331.7M594.7,519.0L577.9,508.2M697.3,498.7L690.1,505.7M658.5,472.9L666.7,466.1M575.0,455.4L580.4,453.9M541.9,359.4L550.1,347.1M702.3,516.7L707.1,506.4M668.2,474.9L658.5,472.9M578.5,353.8L574.8,348.8M657.8,369.9L645.0,363.5M604.1,422.5L595.0,420.4M626.7,484.9L634.7,484.1M563.9,444.2L565.9,450.0M726.4,410.8L728.8,403.3M666.8,343.0L692.0,350.6M609.4,397.7L607.9,388.7M717.6,441.8L713.1,437.3M764.6,502.0L766.4,508.9M567.6,432.2L569.6,441.6M595.8,427.3L586.8,429.7M592.1,456.3L600.1,461.2M711.4,415.2L708.2,422.4M615.3,399.8L614.9,392.5M531.6,403.3L538.8,414.1M465.6,480.4L433.6,496.1M702.3,516.7L690.1,505.7M632.6,582.2L647.0,565.6M680.5,475.3L682.8,482.9M751.3,527.4L767.6,523.1M544.6,382.7L532.6,376.1M658.0,387.0L656.2,378.7M550.4,414.3L548.9,422.8M644.6,444.0L640.0,438.8M634.0,398.1L632.2,391.3M570.6,460.9L575.0,455.4M640.3,413.1L640.4,419.3M636.0,386.2L636.2,373.1M731.8,415.1L726.6,418.1M664.2,460.7L670.8,460.4M747.4,392.8L752.6,403.2M608.4,336.5L601.4,338.5M654.2,434.8L649.8,440.2M633.9,407.8L629.2,412.5M654.2,434.8L660.7,434.2M587.2,338.3L595.0,336.5M696.8,479.2L690.6,481.7M731.2,440.0L725.5,432.3M621.9,551.6L603.7,535.0M650.2,447.0L644.6,444.0M517.4,442.4L533.8,446.4M829.3,431.3L802.9,430.8M717.6,441.8L709.1,442.8M611.0,485.0L604.8,494.4M697.0,600.0L697.9,567.4M753.8,515.0L767.6,523.1M557.3,340.1L553.3,332.7M589.8,474.1L584.8,466.3M622.8,450.7L611.4,447.8M747.7,464.2L743.2,467.7M711.4,415.2L703.9,415.8M594.4,399.9L595.7,406.8M747.3,426.1L754.6,434.4M459.4,396.4L458.7,378.2M792.7,498.9L783.4,502.1M731.1,466.2L732.2,474.4M644.3,458.2L638.4,457.3M549.3,462.1L540.4,466.4M688.8,332.6L666.8,343.0M642.6,485.5L643.1,475.4M678.1,514.8L659.4,524.3M589.2,420.4L582.9,413.3M507.4,385.8L513.2,388.7M806.5,394.1L821.6,402.0M728.8,403.3L722.5,396.5M476.9,421.5L486.7,443.5M784.8,479.7L787.4,486.4M662.1,397.0L656.3,403.1M621.9,551.6L639.4,540.7M509.8,422.2L519.2,429.8M645.9,375.6L651.3,385.5M645.7,433.7L640.0,438.8M484.5,387.5L487.9,394.9M560.8,479.5L575.2,484.5M821.6,402.0L837.6,410.4M636.2,373.1L620.9,367.1M581.5,432.1L579.7,438.8M697.0,600.0L713.3,588.2M624.4,350.7L616.8,339.3M595.8,427.3L589.2,420.4M558.8,422.6L554.7,429.5M688.5,461.0L695.1,454.8M487.2,379.7L495.8,377.7M718.0,498.7L711.8,501.4M687.4,524.7L702.2,532.2M713.3,588.2L729.6,576.4M752.4,476.0L757.1,470.2M794.5,473.7L803.5,483.9M600.8,449.5L608.4,442.7M651.3,385.5L656.1,392.4M644.3,458.2L652.8,452.9M680.3,393.7L678.7,399.2M743.3,494.1L737.4,498.4M567.9,325.0L575.2,313.9M616.5,410.3L622.0,410.0M620.9,367.1L604.8,364.5M487.9,505.2L500.2,488.2M711.4,415.2L716.9,414.0M814.1,474.9L829.2,462.5M794.5,473.7L784.8,479.7M731.1,466.2L727.5,460.5M554.2,443.0L557.1,436.9M664.1,510.0L664.5,501.6M507.4,385.8L502.3,381.2M507.1,471.5L516.6,492.0M681.9,405.9L686.4,410.1M636.2,373.1L627.6,378.9M720.6,459.4L722.5,466.9M614.7,454.2L621.8,461.8M557.3,340.1L562.9,340.7M758.6,480.4L752.9,482.7M590.2,549.6L581.4,533.8M622.8,450.7L628.8,449.4M495.7,393.7L491.3,399.9M608.4,442.7L601.2,440.6M643.1,475.4L647.3,481.5M567.1,543.4L590.2,549.6M519.2,384.2L527.8,382.4M596.1,378.1L604.8,364.5M618.0,429.0L623.4,424.8M751.3,527.4L731.9,526.1M578.2,421.9L570.1,420.7M800.7,463.0L829.2,462.5M745.9,508.4L753.1,507.0M660.7,434.2L666.7,427.1M654.7,506.1L660.9,493.9M558.8,422.6L564.3,418.0M650.2,447.0L655.7,442.0M595.3,484.0L603.6,487.4M371.7,429.0L400.2,455.4M570.2,342.8L568.8,348.5M682.8,482.9L690.6,481.7M756.7,499.8L753.1,507.0M579.1,465.2L584.8,466.3M628.9,458.3L620.4,455.8M673.0,424.0L667.9,421.6M773.1,473.9L779.9,473.9M575.2,484.5L562.1,492.5M651.0,469.0L658.9,466.3M693.7,392.3L694.4,398.5M487.2,379.7L491.6,387.1M755.1,488.1L758.6,480.4M430.0,407.4L454.0,436.3M410.5,395.4L429.8,378.6M673.9,473.6L675.5,479.1M634.9,443.6L644.6,444.0M576.1,335.2L570.2,342.8M783.4,502.1L782.4,491.1M646.6,420.6L650.6,428.2M586.1,386.3L596.8,388.6M717.8,489.9L723.9,496.9M714.1,431.0L713.9,424.4M677.0,487.2L665.4,488.1M811.1,517.3L827.4,505.5M641.9,427.0L640.4,419.3M711.4,415.2L719.0,420.9M586.8,353.6L578.5,353.8M748.3,453.8L741.5,447.4M736.7,489.4L737.4,498.4M632.6,582.2L621.9,551.6M715.7,466.4L707.9,466.4M578.1,392.4L563.1,386.9M659.7,428.0L660.6,422.4M694.2,545.3L697.9,567.4M627.8,407.1L629.2,412.5M714.3,399.6L721.0,404.7M670.8,460.4L666.7,466.1M672.0,445.4L667.7,452.5M713.3,480.0L715.9,473.3M719.8,482.5L713.3,480.0M491.4,457.6L486.7,443.5M728.8,403.3L731.8,415.1M657.8,543.6L668.8,562.4M781.2,441.6L773.3,455.3M660.9,408.2L667.5,416.0M719.8,482.5L724.7,478.8M595.3,484.0L594.3,496.2M657.8,543.6L639.4,540.7M666.8,343.0L667.4,363.6M587.2,338.3L585.1,332.8M736.7,507.6L745.9,508.4M697.5,471.0L696.8,479.2M872.0,470.0L862.7,447.6M616.7,380.2L607.9,388.7M676.7,377.1L667.4,363.6M606.5,412.6L616.5,410.3M755.1,488.1L761.7,493.6M747.7,464.2L747.0,473.1M654.7,506.1L650.9,496.5M549.1,453.6L534.0,458.7M656.3,403.1L653.1,398.5M630.7,432.5L637.4,433.2M605.1,478.5L603.6,487.4M554.2,443.0L546.6,446.0M760.5,426.9L774.8,430.2M748.7,502.4L745.9,508.4M600.8,449.5L592.1,456.3M669.2,482.3L668.2,474.9M565.9,450.0L575.0,455.4M634.0,398.1L633.9,407.8M551.8,489.3L546.3,503.8M639.1,491.4L632.3,499.0M680.5,475.3L690.6,481.7M612.9,414.7L610.9,423.7M525.8,295.4L557.8,307.5M658.9,466.3L653.4,463.9M703.3,442.6L706.6,435.3M544.6,382.7L563.1,386.9M602.2,429.6L595.8,427.3M449.0,362.0L458.7,378.2M751.6,494.4L743.3,494.1M650.6,428.2L641.9,427.0M663.9,403.0L668.2,395.6M365.0,450.0L400.2,455.4M603.7,535.0L608.3,519.6M516.6,492.0L521.7,470.5M430.7,436.4L446.7,464.5M567.9,325.0L561.8,331.5M656.3,403.1L663.9,403.0M716.0,505.3L722.1,509.1M621.0,486.5L618.8,477.2M595.0,336.5L590.3,330.5M599.0,471.9L602.3,467.3M605.1,505.2L594.3,496.2M658.4,447.7L652.8,452.9M620.9,367.1L632.6,360.8M606.8,380.8L596.1,378.1M657.8,543.6L672.6,533.2M671.6,410.3L660.9,408.2M640.3,413.1L633.9,407.8M583.1,277.3L545.2,278.6M579.4,445.8L572.0,448.8M579.1,465.2L580.4,453.9M588.3,414.8L593.6,412.9M814.1,474.9L800.7,463.0M430.0,407.4L407.6,430.4M665.1,387.3L668.2,395.6M592.1,456.3L592.4,462.4M551.8,489.3L539.1,476.6M589.7,441.5L592.5,450.2M602.7,407.9L602.2,400.9M614.7,454.2L611.4,447.8M598.8,415.2L606.5,412.6M805.3,504.5L794.4,489.1M658.5,459.7L658.9,466.3M664.8,591.1L647.0,565.6M375.2,510.9L407.6,489.4M794.4,489.1L803.5,483.9M624.4,350.7L620.9,367.1M449.0,362.0L467.9,345.6M755.1,488.1L761.2,487.8M563.1,386.9L552.0,369.2M544.6,382.7L527.8,382.4M748.7,502.4L743.3,494.1M467.9,345.6L487.0,329.0M716.0,505.3L707.1,506.4M843.7,493.6L859.9,481.8M563.1,386.9L567.1,372.6M610.2,459.9L609.7,465.9M487.9,394.9L480.0,394.4M711.9,547.4L717.4,525.3M515.0,378.3L519.2,384.2M588.3,414.8L582.9,413.3M690.6,437.1L693.2,443.5M579.4,445.8L589.7,441.5M507.1,471.5L500.2,488.2M467.9,345.6L478.3,379.0M693.1,487.0L703.9,486.1M711.4,495.7L711.8,501.4M760.5,426.9L759.7,412.7M767.5,491.4L765.2,483.6M400.2,455.4L382.9,484.0M487.0,329.0L525.8,347.0M814.1,474.9L828.7,484.7M667.9,421.6L666.7,427.1M680.5,475.3L673.9,473.6M484.5,387.5L480.0,394.4M507.3,358.4L525.8,347.0M636.0,386.2L640.1,395.0M606.8,380.8L596.8,388.6M605.4,472.8L612.5,479.0M731.8,498.2L737.4,498.4M578.2,421.9L581.5,432.1M763.2,477.1L773.1,473.9M641.5,497.6L632.3,499.0M618.4,466.4L618.8,477.2M507.1,471.5L491.4,457.6M713.3,588.2L697.9,567.4M430.7,436.4L400.2,455.4M653.1,398.5L656.1,392.4M550.7,526.7L565.0,508.2M594.7,519.0L605.1,505.2M734.5,422.5L725.4,425.3M586.7,488.6L595.3,484.0M884.7,435.0L876.2,470.0M700.9,382.2L701.7,390.0M570.2,342.8L574.8,348.8M802.0,411.5L788.8,431.0M640.1,395.0L643.4,384.0M610.2,459.9L606.6,450.7M581.4,533.8L603.7,535.0M487.9,505.2L509.2,507.3M672.0,445.4L677.3,451.1M781.2,441.6L788.8,431.0M646.6,420.6L652.9,421.7M784.4,454.8L794.3,443.2M794.4,489.1L794.5,473.7M687.4,524.7L702.3,516.7M760.5,426.9L765.7,435.7M562.2,346.4L568.8,348.5M572.0,426.6L570.1,420.7M760.0,395.8L775.5,397.5M652.3,487.4L659.7,483.1M697.3,498.7L705.6,495.1M670.6,401.6L671.6,410.3M712.2,456.5L702.2,457.4M525.8,295.4L550.9,320.0M733.4,480.6L738.9,483.5M643.1,475.4L637.6,477.2M515.9,400.4L518.4,394.3M722.1,509.1L711.8,515.3M542.2,403.0L530.6,391.2M630.7,432.5L627.6,440.8M680.3,393.7L668.2,395.6M627.6,440.8L620.2,439.1M561.8,331.5L557.3,340.1M733.5,378.3L737.6,388.8M649.8,459.6L644.6,465.2M476.9,421.5L454.0,436.3M586.7,488.6L588.5,503.2M509.8,422.2L492.5,416.0M664.1,510.0L659.4,524.3M713.0,407.1L707.3,406.2M692.0,476.2L696.8,479.2M570.4,332.4L561.8,331.5M567.9,325.0L575.2,324.7M635.0,465.9L644.6,465.2M747.2,412.7L753.1,419.7M613.9,440.8L620.2,439.1M635.0,465.9L639.3,471.1M551.8,489.3L550.1,478.4M629.9,421.9L622.5,417.0M622.2,508.4L636.5,517.3M611.0,485.0L603.6,487.4M682.7,459.1L690.1,452.2M780.0,466.0L800.7,463.0M595.3,484.0L605.1,478.5M751.6,494.4L761.7,493.6M563.9,444.2L554.2,443.0M703.9,415.8L700.3,420.6M692.6,404.7L700.1,411.0M884.7,435.0L862.7,447.6M704.7,477.5L696.8,479.2M674.2,417.8L671.6,410.3M714.1,431.0L708.2,422.4M704.7,477.5L703.4,472.0M698.0,426.6L700.3,420.6M686.4,410.1L679.3,411.0M597.1,328.7L601.4,338.5M592.9,324.2L608.6,322.2M642.6,485.5L647.3,481.5M697.3,498.7L689.6,496.0M794.4,489.1L782.4,491.1M692.6,404.7L692.1,411.6M653.1,398.5L647.3,405.5M608.6,322.2L608.4,336.5M679.3,411.0L680.9,419.0M713.3,480.0L710.0,485.7M546.3,503.8L562.1,492.5M622.8,450.7L614.7,454.2M583.8,397.3L571.3,399.2M624.2,472.2L632.0,471.5M670.8,460.4L676.4,458.9M745.7,518.8L740.5,512.1M733.4,480.6L732.2,474.4M713.0,407.1L711.4,415.2M685.8,415.8L693.9,419.3M679.2,467.0L671.9,468.3M682.7,459.1L688.5,461.0M805.3,504.5L803.5,483.9M673.6,387.7L665.1,387.3M595.7,406.8L593.6,412.9M770.0,497.2L770.7,504.3M707.7,395.6L701.8,398.6M602.7,407.9L595.7,406.8M693.7,392.3L690.1,381.2M636.0,386.2L632.2,391.3M727.5,502.0L718.0,498.7M655.0,477.8L652.3,487.4M760.5,426.9L753.1,419.7M521.7,470.5L518.4,456.3M681.8,424.7L677.1,427.9M576.1,335.2L585.1,332.8M706.6,435.3L698.2,438.3M647.8,352.2L632.6,360.8M484.5,387.5L472.3,393.4M635.1,451.6L641.7,450.3M707.7,395.6L710.5,382.1M747.7,464.2L748.3,453.8M762.2,552.7L729.4,540.0M661.9,415.7L660.9,408.2M589.2,420.4L588.3,414.8M548.8,437.3L540.4,440.2M649.4,517.0L644.5,508.1M744.9,438.2L752.8,446.4M666.7,427.1L670.6,436.3M613.9,440.8L607.3,435.2M660.7,434.2L664.8,442.4M658.4,447.7L664.8,442.4M762.7,464.7L770.9,465.4M629.9,421.9L630.7,432.5M690.1,381.2L682.2,386.4M650.9,496.5L646.5,491.7M646.3,399.0L653.1,398.5M655.7,442.0L664.8,442.4M854.7,419.3L873.2,429.0M594.1,467.8L600.1,461.2M518.4,394.3L523.4,389.0M618.0,429.0L620.2,439.1M588.1,407.4L593.6,412.9M788.3,515.8L776.6,505.6M592.9,324.2L585.6,326.5M497.8,385.2L501.7,390.3M703.0,430.1L700.3,420.6M745.9,508.4L740.5,512.1M729.4,515.8L737.3,516.8M668.8,562.4L694.2,545.3M676.4,458.9L682.6,453.1M693.7,392.3L701.8,398.6M776.6,505.6L770.7,504.3M712.2,456.5L719.9,452.8M596.5,437.2L587.8,436.0M467.9,345.6L458.7,378.2M610.2,459.9L618.4,466.4M582.2,346.3L574.8,348.8M599.0,471.9L605.1,478.5M624.2,472.2L618.8,477.2M572.6,476.4L566.2,467.4M626.0,396.3L623.8,387.4M716.9,414.0L719.0,420.9M811.1,517.3L805.3,504.5M731.8,498.2L730.4,508.0M550.7,526.7L546.3,503.8M764.6,502.0L761.7,493.6M688.1,421.1L693.9,419.3M439.5,528.7L433.6,496.1M654.7,506.1L649.4,517.0M669.2,482.3L663.5,478.8M712.2,456.5L702.3,450.7M623.7,498.3L632.3,499.0M622.2,508.4L634.5,506.7M560.8,479.5L550.1,478.4M588.1,407.4L582.9,413.3M595.3,484.0L597.4,477.6M778.5,540.9L767.6,523.1M664.8,442.4L670.6,436.3M719.7,429.2L713.9,424.4M572.6,476.4L573.0,469.0M586.7,488.6L571.4,498.1M763.2,477.1L765.2,483.6M802.9,430.8L788.8,431.0M631.7,478.4L632.0,471.5M752.4,476.0L758.6,480.4M682.9,438.2L675.0,439.7M664.8,591.1L697.9,567.4M584.5,423.7L589.2,420.4M606.5,412.6L609.4,403.3M628.9,458.3L635.1,451.6M748.7,502.4L753.1,507.0M570.4,332.4L575.2,324.7M560.8,479.5L572.6,476.4M658.5,459.7L649.8,459.6M564.3,418.0L565.3,424.9M662.1,397.0L668.2,395.6M714.8,372.9L716.7,390.0M678.2,359.7L667.4,363.6M584.5,423.7L582.9,413.3M643.1,475.4L644.6,465.2M565.0,508.2L546.3,503.8M407.4,519.8L407.6,489.4M658.0,387.0L665.1,387.3M778.1,481.0L772.2,487.5M748.1,486.8L752.9,482.7M657.8,369.9L665.1,380.3M744.9,438.2L739.9,427.7M626.0,396.3L623.2,401.2M666.7,466.1L671.9,468.3M745.9,508.4L742.6,500.9M670.8,460.4L667.7,452.5M517.4,442.4L529.4,437.0M602.2,429.6L610.4,430.2M690.6,437.1L694.0,431.5M616.7,380.2L614.9,392.5M533.7,497.0L526.7,482.6M563.9,444.2L557.3,450.6M569.6,441.6L579.7,438.8M584.6,448.6L585.9,457.7M540.8,429.6L540.4,440.2M675.8,505.3L664.5,501.6M781.2,441.6L761.3,445.3M589.7,441.5L587.8,436.0M460.9,418.3L476.9,421.5M533.7,497.0L551.8,489.3M605.1,505.2L613.6,496.0M585.2,320.2L580.0,328.4M527.6,421.8L538.8,414.1M727.8,485.1L736.7,489.4M840.4,449.4L862.7,447.6M612.6,472.1L605.4,472.8M606.8,380.8L607.9,388.7M719.0,420.9L726.6,418.1M627.8,407.1L623.2,401.2M701.5,405.5L707.3,406.2M558.8,422.6L565.3,424.9M673.6,387.7L665.1,380.3M605.1,478.5L597.4,477.6M541.9,359.4L552.0,369.2M623.2,401.2L618.9,404.9M720.6,459.4L727.5,460.5M687.4,524.7L678.1,514.8M680.5,475.3L692.0,476.2M636.5,517.3L634.5,506.7M600.8,449.5L606.6,450.7M784.4,454.8L800.7,463.0M567.1,543.4L571.3,521.5M782.4,491.1L772.2,487.5M495.7,393.7L491.6,387.1M747.7,464.2L757.1,470.2M696.7,448.5L695.1,454.8M736.7,489.4L731.8,498.2M778.1,481.0L784.8,479.7M697.5,471.0L695.8,462.5M672.0,445.4L670.6,436.3M622.2,508.4L632.3,499.0M561.8,331.5L562.9,340.7M748.3,453.8L740.7,460.5M750.1,364.6L751.3,378.1M579.1,465.2L573.0,469.0M487.9,505.2L484.3,475.3M632.3,335.1L621.1,322.2M371.7,429.0L391.1,412.2M539.7,327.9L550.9,320.0M659.4,524.3L649.4,517.0M627.8,407.1L633.9,407.8M400.2,455.4L407.6,489.4M666.8,343.0L647.8,352.2M481.5,403.1L487.9,394.9M761.3,445.3L752.8,446.4M599.0,471.9L597.4,477.6M753.8,515.0L751.3,527.4M391.1,412.2L410.5,395.4M778.5,540.9L794.8,529.1M673.6,387.7L682.2,386.4M618.8,477.2L612.5,479.0M712.2,456.5L715.7,466.4M602.2,429.6L604.1,422.5M665.4,488.1L663.5,478.8M588.6,364.0L575.7,379.8M794.8,529.1L811.1,517.3M674.2,417.8L680.9,419.0M627.6,440.8L625.6,434.8M747.3,426.1L741.6,420.4M668.2,474.9L675.5,479.1M694.0,431.5L698.2,438.3M562.2,346.4L550.1,347.1M677.0,487.2L686.3,488.2M371.7,429.0L365.0,450.0M705.5,341.3L692.0,350.6M703.3,442.6L693.2,443.5M632.6,489.3L639.1,491.4M649.8,459.6L652.8,452.9M570.6,460.9L566.2,467.4M628.9,458.3L627.4,465.7M578.2,421.9L574.3,416.2M609.4,397.7L602.2,400.9M497.4,401.0L492.5,416.0M606.6,450.7L611.4,447.8M647.6,413.8L647.3,405.5M806.4,449.0L794.3,443.2M736.7,507.6L737.4,498.4M610.2,459.9L621.8,461.8M592.0,432.1L595.8,427.3M752.4,476.0L752.9,482.7M642.6,485.5L637.6,477.2M672.0,430.7L677.1,427.9M693.1,487.0L690.6,481.7M641.5,497.6L644.5,508.1M570.6,460.9L573.0,469.0M588.3,414.8L588.1,407.4M429.8,378.6L430.0,407.4M600.8,449.5L592.5,450.2M716.9,414.0L726.4,410.8M611.0,485.0L605.1,478.5M695.8,462.5L688.5,461.0M521.7,470.5L540.4,466.4M622.0,410.0L618.9,404.9M711.4,495.7L718.0,498.7M566.9,411.6L570.1,420.7M565.0,508.2L562.1,492.5M629.9,421.9L633.7,417.8M495.4,370.3L495.8,377.7M678.2,359.7L692.9,367.6M569.6,441.6L572.0,448.8M581.4,339.0L587.2,338.3M548.8,437.3L554.7,429.5M662.1,397.0L653.1,398.5M594.7,519.0L603.7,535.0M655.0,477.8L658.5,472.9M664.1,510.0L649.4,517.0M760.4,456.1L752.8,446.4M644.3,458.2L644.6,465.2M530.8,516.6L525.2,536.2M558.8,353.9L541.9,359.4M571.4,498.1L562.1,492.5M605.4,472.8L605.1,478.5M652.3,487.4L660.9,493.9M562.6,460.1L566.2,467.4M508.0,525.4L509.2,507.3M716.0,505.3L711.8,501.4M737.3,516.8L745.7,518.8M656.3,403.1L647.3,405.5M660.7,434.2L670.6,436.3M738.6,413.6L741.6,404.3M636.2,373.1L632.6,360.8M719.8,482.5L715.9,473.3M596.1,348.2L595.0,336.5M472.5,447.8L465.6,480.4M655.0,477.8L659.7,483.1M632.6,489.3L626.7,484.9M662.1,397.0L663.9,403.0M666.7,427.1L672.0,430.7M655.2,414.4L660.6,422.4M654.2,434.8L650.6,428.2M645.9,375.6L645.0,363.5M711.4,495.7L710.0,485.7M567.1,372.6L578.5,353.8M567.1,543.4L581.4,533.8M779.5,415.4L802.0,411.5M708.2,422.4L700.3,420.6M592.0,432.1L587.8,436.0M627.6,378.9L623.8,387.4M734.5,422.5L738.6,413.6M772.5,481.7L772.2,487.5M661.4,452.5L667.7,452.5M594.4,399.9L596.8,388.6M550.4,414.3L538.8,414.1M515.0,370.1L515.0,378.3M755.4,464.0L757.1,470.2M737.3,516.8L740.5,512.1M690.1,505.7L675.8,505.3M679.2,467.0L676.4,458.9M594.1,467.8L592.4,462.4M673.6,387.7L676.7,377.1M779.5,415.4L769.6,419.1M671.6,410.3L676.3,404.4M497.8,385.2L502.3,381.2M592.1,456.3L585.9,457.7M429.8,378.6L459.4,396.4M530.6,391.2L523.4,389.0M806.4,449.0L829.2,462.5M725.4,425.3L731.4,432.6M624.4,350.7L604.8,364.5M685.8,415.8L686.4,410.1M533.7,497.0L546.3,503.8M531.6,403.3L521.3,408.3M647.8,352.2L645.0,363.5M829.3,431.3L840.4,449.4M495.8,377.7L502.3,381.2M581.5,432.1L586.8,429.7M523.8,398.3L523.4,389.0M574.3,416.2L570.1,420.7M837.6,410.4L829.3,431.3M655.0,477.8L663.5,478.8M513.2,388.7L519.2,384.2M429.8,378.6L449.0,362.0M651.0,469.0L653.4,463.9M727.5,460.5L735.3,456.7M673.0,424.0L680.9,419.0M521.7,379.0L515.0,370.1M688.1,446.8L682.6,453.1M583.8,397.3L596.8,388.6M827.4,505.5L843.7,493.6M541.9,359.4L539.7,341.7M612.9,414.7L616.5,410.3M487.0,329.0L507.3,358.4M684.8,399.1L678.7,399.2M690.6,437.1L698.2,438.3M642.6,485.5L634.7,484.1M610.4,430.2L618.0,429.0M588.6,364.0L596.1,378.1M410.5,395.4L407.6,430.4M598.8,415.2L595.0,420.4M521.7,379.0L532.6,376.1M587.2,338.3L588.0,345.0M731.2,440.0L727.1,445.2M647.8,352.2L667.4,363.6M719.8,482.5L727.8,485.1M540.8,429.6L554.7,429.5M472.5,447.8L484.3,475.3M430.7,436.4L430.0,407.4M583.1,277.3L584.6,304.0M531.6,403.3L530.6,391.2M544.6,382.7L552.0,369.2M685.8,433.4L677.1,427.9M712.2,456.5L707.9,466.4M668.2,474.9L666.7,466.1M550.4,414.3L564.3,418.0M731.9,526.1L729.4,515.8M533.7,497.0L539.1,476.6M626.0,478.9L632.0,471.5M519.2,384.2L523.4,389.0M586.1,386.3L575.7,379.8M740.7,460.5L735.3,456.7M645.7,433.7L649.8,440.2M766.4,508.9L758.6,505.7M788.3,515.8L783.4,502.1M767.6,523.1L773.2,515.8M712.2,456.5L703.2,463.3M667.9,421.6L661.9,415.7M500.2,488.2L509.2,507.3M650.6,428.2L652.9,421.7M507.1,471.5L484.3,475.3M641.5,406.0L640.3,413.1M604.1,422.5L595.8,427.3M582.0,479.2L572.6,476.4M621.0,486.5L613.6,496.0M446.7,464.5L465.6,480.4M698.0,426.6L694.0,431.5M658.5,459.7L661.4,452.5M700.1,411.0L693.9,419.3M778.1,481.0L787.4,486.4M556.9,405.0L564.3,418.0M598.8,415.2L595.7,406.8M603.2,328.6L608.4,336.5M671.6,410.3L679.3,411.0M584.6,304.0L608.6,322.2M692.9,367.6L707.1,359.5M433.6,496.1L407.6,489.4M692.2,425.2L685.8,433.4M563.9,444.2L569.6,441.6M773.2,515.8L761.3,511.3M736.7,507.6L730.4,508.0M727.7,450.7L727.1,445.2M741.6,404.3L752.6,403.2M481.5,403.1L480.0,394.4M719.9,452.8L727.5,460.5M657.8,543.6L659.4,524.3M602.7,394.8L607.9,388.7M557.3,450.6L562.6,460.1M533.7,497.0L516.6,492.0M693.9,419.3L692.1,411.6M641.9,427.0L645.7,433.7M681.9,405.9L678.7,399.2M562.2,346.4L557.3,340.1M581.4,339.0L570.2,342.8M670.7,323.1L649.6,331.7M539.7,327.9L553.3,332.7M674.2,417.8L679.3,411.0M688.8,332.6L692.0,350.6M565.9,450.0L569.6,441.6M608.4,442.7L606.6,450.7M709.1,442.8L706.6,435.3M478.3,379.0L487.2,379.7M618.0,421.8L623.4,424.8M507.3,358.4L508.1,375.9M634.3,428.1L641.9,427.0M747.4,392.8L751.3,378.1M646.3,399.0L639.6,400.6M695.8,462.5L703.2,463.3M589.2,420.4L586.8,429.7M606.8,380.8L604.8,364.5M681.6,497.7L686.3,488.2M549.1,453.6L549.3,462.1M719.9,452.8L720.6,459.4M655.7,442.0L649.8,440.2M570.4,332.4L576.1,335.2M626.0,478.9L618.8,477.2M616.7,380.2L620.9,367.1M727.8,485.1L717.8,489.9M615.3,399.8L609.4,397.7M734.5,422.5L739.9,427.7M788.3,515.8L773.2,515.8M643.1,475.4L655.0,477.8M521.7,379.0L519.2,384.2M781.2,441.6L794.3,443.2M800.7,463.0L794.3,443.2M467.9,345.6L506.4,312.2M657.8,369.9L667.4,363.6M690.1,452.2L682.6,453.1M658.5,459.7L653.4,463.9M501.0,396.1L501.7,390.3M647.1,392.2L643.4,384.0M624.4,350.7L632.6,360.8M495.4,370.3L501.8,374.8M693.2,443.5L698.2,438.3M703.0,430.1L694.0,431.5M616.7,380.2L627.6,378.9M806.4,449.0L800.7,463.0M631.7,478.4L634.7,484.1M843.7,493.6L828.7,484.7M566.9,411.6L564.3,418.0M472.5,447.8L486.7,443.5M472.3,393.4L458.7,378.2M702.2,457.4L703.2,463.3M776.6,505.6L770.0,497.2M700.1,411.0L707.3,406.2M714.1,431.0L719.7,429.2M739.9,427.7L741.6,420.4M702.3,450.7L713.2,449.5M527.8,382.4L523.4,389.0M792.7,498.9L782.4,491.1M712.2,456.5L713.2,449.5M491.4,457.6L505.1,454.0M724.2,473.0L715.9,473.3M603.6,344.6L608.4,336.5M779.5,415.4L774.8,430.2M744.9,438.2L741.5,447.4M563.1,386.9L571.3,399.2M707.1,506.4L705.6,495.1M476.9,421.5L492.5,416.0M594.7,519.0L588.5,503.2M539.1,476.6L550.1,478.4M751.6,494.4L748.7,502.4M616.7,380.2L623.8,387.4M623.0,445.0L611.4,447.8M736.7,489.4L738.9,483.5M600.1,461.2L592.4,462.4M527.6,421.8L509.8,422.2M747.2,412.7L741.6,404.3M719.8,482.5L710.0,485.7M507.4,385.8L515.0,378.3M588.5,503.2L571.4,498.1M678.1,444.8L677.3,451.1M717.8,489.9L726.3,491.5M705.5,341.3L707.1,359.5M586.1,386.3L596.1,378.1M527.6,421.8L540.8,429.6M713.0,407.1L716.9,414.0M722.1,509.1L727.5,502.0M602.2,429.6L607.3,435.2M702.3,450.7L695.1,454.8M635.1,451.6L628.8,449.4M700.1,411.0L700.3,420.6M567.6,432.2L557.1,436.9M686.3,488.2L689.6,496.0M734.3,449.7L738.3,441.2M707.1,506.4L711.8,501.4M540.4,440.2L546.6,446.0M646.3,399.0L647.3,405.5M670.8,460.4L671.9,468.3M859.9,481.8L829.2,462.5M588.0,345.0L595.0,336.5M747.7,464.2L755.4,464.0M779.5,415.4L788.9,403.1M653.0,408.0L647.3,405.5M668.8,562.4L672.6,533.2M758.6,480.4L761.2,487.8M784.4,454.8L780.0,466.0M365.0,450.0L382.9,484.0M702.3,450.7L696.7,448.5M527.6,421.8L519.2,429.8M621.1,322.2L608.4,336.5M717.4,525.3L722.1,509.1M446.7,464.5L433.6,496.1M735.9,357.2L714.8,372.9M622.2,508.4L620.0,531.5M623.0,445.0L628.8,449.4M423.9,467.9L446.7,464.5M747.7,464.2L740.7,460.5M481.5,403.1L472.3,393.4M521.3,408.3L504.7,403.3M736.7,489.4L733.4,480.6M496.8,430.8L486.7,443.5M609.7,465.9L605.4,472.8M636.2,373.1L645.0,363.5M714.3,399.6L707.3,406.2M748.7,502.4L756.7,499.8M736.7,489.4L748.1,486.8M655.2,414.4L652.9,421.7M533.8,446.4L518.4,456.3M637.4,433.2L640.0,438.8M707.7,395.6L707.3,406.2M788.3,515.8L792.7,498.9M606.6,450.7L614.7,454.2M748.1,486.8L745.2,479.6M595.7,444.0L589.7,441.5M646.6,420.6L647.6,413.8M600.9,352.7L604.8,364.5M579.4,445.8L579.7,438.8M650.8,312.7L670.7,323.1M577.7,405.3L566.9,411.6M774.8,430.2L769.6,419.1M645.7,433.7L637.4,433.2M701.8,398.6L701.5,405.5M695.8,462.5L695.1,454.8M650.8,312.7L621.1,322.2M651.3,385.5L658.0,387.0M715.7,466.4L709.6,471.8M658.5,472.9L663.5,478.8M375.2,510.9L407.4,519.8M400.2,455.4L407.6,430.4M639.4,540.7L659.4,524.3M854.7,419.3L829.3,431.3M604.1,422.5L610.9,423.7M764.1,371.9L760.0,395.8M692.6,404.7L684.8,399.1M506.4,312.2L545.2,278.6M589.8,474.1L597.4,477.6M557.8,307.5L550.9,320.0M753.8,515.0L753.1,507.0M671.6,410.3L663.9,403.0M716.7,390.0L710.5,382.1M778.1,481.0L773.1,473.9M673.9,473.6L668.2,474.9M837.6,410.4L817.0,419.6M717.8,489.9L718.0,498.7M592.9,324.2L597.1,328.7M711.9,547.4L702.2,532.2M688.1,446.8L693.2,443.5M606.6,450.7L603.0,455.5M778.3,495.4L776.6,505.6M719.0,420.9L713.9,424.4M595.0,336.5L601.4,338.5M589.2,420.4L595.0,420.4M710.5,382.1L701.7,390.0M760.0,395.8L751.3,378.1M632.6,489.3L623.7,498.3M628.9,458.3L638.4,457.3M664.2,460.7L658.9,466.3M713.2,449.5L721.0,446.4M763.2,477.1L757.1,470.2M697.3,498.7L703.9,486.1M521.7,379.0L527.8,382.4M634.0,398.1L639.6,400.6M572.0,426.6L565.3,424.9M686.9,469.7L697.5,471.0M590.3,330.5L585.6,326.5M549.1,453.6L546.6,446.0M702.2,457.4L695.1,454.8M575.0,455.4L572.0,448.8M521.3,408.3L523.8,398.3M628.9,458.3L621.8,461.8M697.5,471.0L703.4,472.0M802.9,430.8L794.3,443.2M716.0,505.3L718.0,498.7M575.2,484.5L572.6,476.4M650.2,447.0L649.8,440.2M507.3,358.4L501.8,374.8M581.4,533.8L571.3,521.5M423.9,467.9L400.2,455.4M760.0,395.8L752.6,403.2M557.1,436.9L554.7,429.5M658.0,387.0L656.1,392.4M636.5,517.3L620.0,531.5M707.7,395.6L716.7,390.0M536.1,555.5L525.2,536.2M773.2,515.8L766.4,508.9M717.8,489.9L710.0,485.7M685.8,433.4L694.0,431.5M542.2,403.0L550.4,414.3M562.2,346.4L562.9,340.7M703.3,442.6L702.3,450.7M703.0,430.1L706.6,435.3M667.9,421.6L667.5,416.0M708.2,422.4L703.0,430.1M558.8,353.9L568.8,348.5M762.2,552.7L778.5,540.9M484.3,475.3L491.4,457.6M471.7,537.6L508.0,525.4M592.5,450.2L585.9,457.7M515.0,370.1L508.1,375.9M733.5,378.3L714.8,372.9M738.6,413.6L731.8,415.1M592.9,324.2L603.2,328.6M655.0,477.8L647.3,481.5M681.9,405.9L679.3,411.0M382.9,484.0L407.6,489.4M761.3,445.3L773.3,455.3M570.6,460.9L562.6,460.1M560.8,479.5L557.2,471.2M616.8,339.3L608.4,336.5M502.3,381.2L508.1,375.9M681.6,497.7L689.6,496.0M735.9,357.2L733.5,378.3M706.6,435.3L713.1,437.3M693.7,392.3L701.7,390.0M752.4,476.0L745.2,479.6M618.9,404.9L609.4,403.3M703.3,442.6L698.2,438.3M652.8,452.9L641.7,450.3M610.4,430.2L610.9,423.7M703.0,430.1L698.2,438.3M714.8,372.9L726.8,389.3M734.5,422.5L726.6,418.1M731.9,526.1L745.7,518.8M688.1,446.8L678.1,444.8M635.0,465.9L627.4,465.7M681.8,424.7L673.0,424.0M558.8,353.9L552.0,369.2M751.6,494.4L755.1,488.1M459.4,396.4L481.5,403.1M558.8,353.9L567.1,372.6M725.4,425.3L719.0,420.9M711.4,495.7L705.6,495.1M736.7,489.4L726.3,491.5M596.5,437.2L601.2,440.6M698.0,426.6L693.9,419.3M727.7,450.7L727.5,460.5M737.2,434.7L731.2,440.0M647.6,413.8L652.9,421.7M728.8,403.3L726.8,389.3M641.9,427.0L637.4,433.2M536.1,555.5L567.1,543.4M516.6,492.0L509.2,507.3M604.1,422.5L610.4,430.2M702.3,516.7L711.8,515.3M729.4,540.0L731.9,526.1M550.1,478.4L540.4,466.4M492.5,416.0L491.3,399.9M651.3,385.5L643.4,384.0M802.9,430.8L822.0,445.5M616.5,410.3L609.4,403.3M583.8,397.3L577.7,405.3M561.5,396.9L549.5,392.8M594.4,399.9L588.1,407.4M721.0,404.7L722.5,396.5M715.7,466.4L722.5,466.9M581.4,339.0L585.1,332.8M571.4,498.1L575.2,484.5M626.7,484.9L623.7,498.3M459.4,396.4L430.0,407.4M748.1,486.8L743.3,494.1M677.0,434.2L685.8,433.4M542.2,403.0L549.5,392.8M610.2,459.9L614.7,454.2M716.7,390.0L722.5,396.5M681.9,405.9L684.8,399.1M859.9,481.8L828.7,484.7M778.3,495.4L772.2,487.5M759.7,412.7L753.1,419.7M760.4,456.1L773.3,455.3M715.9,473.3L709.6,471.8M687.4,524.7L694.2,545.3M686.9,469.7L688.5,461.0M481.5,403.1L492.5,416.0M506.4,312.2L525.8,347.0M781.2,441.6L784.4,454.8M840.4,449.4L829.2,462.5M794.5,473.7L787.4,486.4M693.1,487.0L686.3,488.2M651.0,469.0L643.1,475.4M703.9,486.1L696.8,479.2M556.9,405.0L566.9,411.6M761.3,511.3L753.1,507.0M640.0,438.8L649.8,440.2M622.5,417.0L622.0,410.0M583.8,397.3L588.1,407.4M685.8,415.8L692.1,411.6M707.9,466.4L703.4,472.0M566.9,411.6L574.3,416.2M497.4,401.0L501.0,396.1M747.0,473.1L738.6,473.3M748.1,486.8L755.1,488.1M770.7,504.3L766.4,508.9M471.7,537.6L466.8,499.1M665.1,380.3L665.1,387.3M584.8,466.3L580.1,473.0M531.6,403.3L542.2,403.0M472.5,447.8L454.0,436.3M610.2,459.9L603.0,455.5M423.9,467.9L433.6,496.1M703.9,415.8L707.3,406.2M670.6,436.3L672.0,430.7M772.5,481.7L773.1,473.9M721.1,349.4L707.1,359.5M621.0,486.5L612.5,479.0M761.7,493.6L761.2,487.8M533.8,446.4L540.4,440.2M639.3,471.1L637.6,477.2M859.9,481.8L862.7,447.6M553.3,332.7L550.1,347.1M539.7,327.9L539.7,341.7M672.0,445.4L664.8,442.4M582.0,479.2L575.2,484.5M773.3,455.3L770.9,465.4M740.7,460.5L741.5,447.4M623.8,387.4L620.3,394.7M762.7,464.7L755.4,464.0M610.2,459.9L600.1,461.2M719.9,452.8L713.2,449.5M579.4,445.8L584.6,448.6M805.3,504.5L788.3,515.8M626.0,396.3L632.2,391.3M354.0,479.0L382.9,484.0M603.7,535.0L620.0,531.5M723.3,438.4L721.0,446.4M605.1,505.2L588.5,503.2M550.7,526.7L525.2,536.2M723.9,496.9L727.5,502.0M692.2,425.2L688.1,421.1M724.2,473.0L724.7,478.8M588.3,414.8L595.0,420.4M654.7,506.1L664.1,510.0M640.3,413.1L633.7,417.8M714.1,431.0L713.1,437.3M628.9,458.3L628.8,449.4M516.6,492.0L526.7,482.6M621.9,551.6L647.0,565.6M715.9,473.3L724.7,478.8M727.8,485.1L724.7,478.8M731.8,498.2L726.3,491.5M567.9,325.0L550.9,320.0M533.7,497.0L509.2,507.3M506.4,312.2L525.8,295.4M508.3,397.8L507.4,385.8M687.4,524.7L690.1,505.7M618.0,429.0L614.7,434.1M659.7,428.0L660.7,434.2M574.9,435.6L572.0,426.6M760.5,426.9L754.6,434.4M583.8,397.3L586.1,386.3M525.8,295.4L545.2,278.6M778.0,379.2L760.0,395.8M636.5,517.3L649.4,517.0M724.2,473.0L722.5,466.9M565.9,450.0L562.6,460.1M646.6,420.6L640.4,419.3M574.8,348.8L568.8,348.5M594.7,519.0L608.3,519.6M429.8,378.6L458.7,378.2M692.9,367.6L700.9,382.2M719.9,452.8L727.7,450.7M659.7,428.0L652.9,421.7M596.1,378.1L596.8,388.6M682.7,459.1L676.4,458.9M507.4,385.8L508.1,375.9M701.8,398.6L707.3,406.2M745.9,508.4L745.7,518.8M550.7,526.7L567.1,543.4M715.9,473.3L722.5,466.9M761.3,511.3L758.6,505.7M446.7,464.5L454.0,436.3M672.0,445.4L678.1,444.8M566.2,467.4L573.0,469.0M639.4,540.7L649.4,517.0M540.8,429.6L529.4,437.0M767.5,491.4L761.7,493.6M460.9,418.3L481.5,403.1M692.0,476.2L690.6,481.7M596.8,388.6L607.9,388.7M658.4,447.7L661.4,452.5M774.8,430.2L765.7,435.7M542.2,403.0L538.8,414.1M737.2,434.7L739.9,427.7M600.9,352.7L586.8,353.6M673.0,424.0L672.0,430.7M682.9,438.2L685.8,433.4M703.4,472.0L709.6,471.8M521.7,470.5L526.7,482.6M609.7,465.9L602.3,467.3M608.4,442.7L611.4,447.8M664.1,510.0L678.1,514.8M585.9,457.7L580.4,453.9M578.1,392.4L583.8,397.3M560.4,265.4L583.1,277.3M738.6,473.3L743.2,467.7M697.3,498.7L693.1,487.0M472.3,393.4L480.0,394.4M505.1,454.0L518.4,456.3M693.2,443.5L696.7,448.5M625.6,434.8L623.4,424.8M616.7,380.2L604.8,364.5M567.1,372.6L552.0,369.2M784.8,479.7L779.9,473.9M365.0,450.0L354.0,479.0M584.5,423.7L578.2,421.9M608.3,519.6L620.0,531.5M588.0,345.0L582.2,346.3M778.3,495.4L782.4,491.1M732.2,474.4L724.7,478.8M703.4,472.0L703.2,463.3M729.4,515.8L730.4,508.0M578.1,392.4L571.3,399.2M745.2,479.6L738.9,483.5M503.9,546.5L508.0,525.4M794.4,489.1L787.4,486.4M580.0,328.4L575.2,324.7M600.5,573.3L590.2,549.6M778.3,495.4L783.4,502.1M711.9,547.4L697.9,567.4M673.0,424.0L666.7,427.1M726.8,389.3L737.6,388.8M716.7,390.0L726.8,389.3M634.9,443.6L637.4,433.2M729.4,540.0L717.4,525.3M497.8,385.2L495.7,393.7M827.4,505.5L805.3,504.5M677.3,451.1L676.4,458.9M694.4,398.5L684.8,399.1M558.8,353.9L550.1,347.1M747.4,392.8L737.6,388.8M508.3,397.8L501.7,390.3M621.0,486.5L626.7,484.9M657.8,543.6L647.0,565.6M690.1,505.7L678.1,514.8M577.7,405.3L571.3,399.2M507.1,471.5L521.7,470.5M716.9,414.0L726.6,418.1M681.8,424.7L692.2,425.2M532.6,376.1L527.8,382.4M580.1,473.0L573.0,469.0M588.6,364.0L604.8,364.5M773.2,515.8L770.7,504.3M497.4,401.0L504.7,403.3M747.2,412.7L752.6,403.2M659.7,483.1L665.4,488.1M581.4,339.0L582.2,346.3M723.3,438.4L719.7,429.2M584.6,304.0L585.2,320.2M623.0,445.0L620.2,439.1M643.1,475.4L639.3,471.1M562.6,460.1L557.2,471.2M705.6,495.1L711.8,501.4M650.8,312.7L632.3,335.1M694.2,545.3L672.6,533.2M544.6,382.7L530.6,391.2M627.8,407.1L622.0,410.0M767.5,491.4L761.2,487.8M729.4,515.8L722.1,509.1M753.1,507.0L758.6,505.7M594.7,519.0L571.3,521.5M557.3,340.1L550.1,347.1M647.8,352.2L632.3,335.1M772.5,481.7L765.2,483.6M621.0,486.5L626.0,478.9M670.6,401.6L678.7,399.2M662.1,397.0L665.1,387.3M728.8,403.3L721.0,404.7M659.7,483.1L663.5,478.8M618.4,466.4L627.4,465.7M651.3,385.5L647.1,392.2M584.6,304.0L592.9,324.2M723.9,496.9L731.8,498.2M641.5,406.0L633.9,407.8M634.9,443.6L630.7,432.5M602.7,407.9L609.4,403.3M501.8,374.8L502.3,381.2M692.6,404.7L694.4,398.5M478.3,379.0L472.3,393.4M624.4,350.7L603.6,344.6M659.7,428.0L666.7,427.1M680.3,393.7L682.2,386.4M614.9,392.5L607.9,388.7M726.4,410.8L731.8,415.1M711.9,547.4L729.4,540.0M595.0,336.5L597.1,328.7M686.9,469.7L692.0,476.2M615.3,399.8L609.4,403.3M714.3,399.6L722.5,396.5M596.1,348.2L588.0,345.0M589.7,441.5L579.7,438.8M460.9,418.3L459.4,396.4M549.3,462.1L562.6,460.1M748.3,453.8L755.4,464.0M714.8,372.9L707.1,359.5M727.5,460.5L722.5,466.9M788.9,403.1L775.5,397.5M532.6,376.1L541.9,359.4M693.1,487.0L696.8,479.2M600.8,449.5L603.0,455.5M634.0,398.1L626.0,396.3M632.0,471.5L627.4,465.7M657.8,369.9L645.9,375.6M595.7,444.0L601.2,440.6M744.9,438.2L754.6,434.4M607.3,435.2L601.2,440.6M700.9,382.2L710.5,382.1M610.4,430.2L614.7,434.1M700.1,411.0L701.5,405.5M763.2,477.1L758.6,480.4M580.0,328.4L585.1,332.8M540.8,429.6L548.8,437.3M738.6,413.6L747.2,412.7M554.2,443.0L557.3,450.6M609.7,465.9L612.6,472.1M605.9,289.2L628.6,301.1M725.4,425.3L719.7,429.2M714.8,372.9L692.9,367.6M677.0,434.2L670.6,436.3M577.9,508.2L571.4,498.1M507.3,358.4L515.0,370.1M611.0,485.0L621.0,486.5M772.5,481.7L763.2,477.1M628.6,301.1L650.8,312.7M666.8,343.0L678.2,359.7M770.0,497.2L761.7,493.6M523.8,398.3L518.4,394.3M602.7,394.8L602.2,400.9M876.2,470.0L862.7,447.6M658.5,459.7L652.8,452.9M751.3,527.4L729.4,540.0M343.0,502.0L375.2,510.9M703.9,486.1L704.7,477.5M496.8,430.8L509.8,422.2M634.3,428.1L640.4,419.3M578.1,392.4L575.7,379.8M423.9,467.9L430.7,436.4M731.2,440.0L731.4,432.6M641.5,497.6L650.9,496.5M578.2,421.9L582.9,413.3M680.5,475.3L679.2,467.0M677.0,487.2L669.2,482.3M646.6,420.6L641.9,427.0M697.5,471.0L692.0,476.2M635.0,465.9L638.4,457.3M731.1,466.2L735.3,456.7M735.3,456.7L741.5,447.4M780.0,466.0L779.9,473.9M531.6,403.3L523.8,398.3M736.7,489.4L743.3,494.1M594.7,519.0L581.4,533.8M567.6,432.2L565.3,424.9M627.6,378.9L620.9,367.1M745.2,479.6L738.6,473.3M588.1,407.4L595.7,406.8M634.9,443.6L627.6,440.8M507.1,471.5L518.4,456.3M702.3,516.7L717.4,525.3M622.2,508.4L613.6,496.0M642.6,485.5L639.1,491.4M761.3,445.3L765.7,435.7M615.3,399.8L620.3,394.7M557.2,471.2L566.2,467.4M496.8,430.8L519.2,429.8M735.9,357.2L750.1,364.6M504.7,403.3L492.5,416.0M529.4,437.0L519.2,429.8M589.7,441.5L596.5,437.2M536.1,555.5L568.3,564.4M765.2,483.6L758.6,480.4M595.0,420.4L593.6,412.9M738.6,413.6L741.6,420.4M639.4,540.7L647.0,565.6M703.3,442.6L696.7,448.5M678.1,444.8L682.6,453.1M661.4,452.5L652.8,452.9M731.4,432.6L739.9,427.7M558.8,422.6L550.4,414.3M565.9,450.0L572.0,448.8M812.6,488.9L805.3,504.5M753.8,515.0L745.9,508.4M764.6,502.0L758.6,505.7M481.5,403.1L476.9,421.5M655.2,414.4L653.0,408.0M521.7,470.5L539.1,476.6M670.6,401.6L676.3,404.4M827.4,505.5L812.6,488.9M487.9,394.9L495.7,393.7M614.9,392.5L620.3,394.7M621.8,461.8L620.4,455.8M622.8,450.7L620.4,455.8M371.7,429.0L407.6,430.4M621.1,322.2L608.6,322.2M582.0,479.2L580.1,473.0M668.2,474.9L671.9,468.3M762.2,552.7L767.6,523.1M629.9,421.9L623.4,424.8M592.9,324.2L590.3,330.5M829.2,462.5L828.7,484.7M688.1,421.1L680.9,419.0M664.2,460.7L661.4,452.5M806.4,449.0L822.0,445.5M677.0,487.2L675.5,479.1M624.2,472.2L627.4,465.7M497.4,401.0L495.7,393.7M734.5,422.5L731.4,432.6M644.6,444.0L649.8,440.2M588.6,364.0L567.1,372.6M584.6,448.6L592.5,450.2M660.9,408.2L653.0,408.0M507.4,385.8L501.7,390.3M704.7,477.5L710.0,485.7M636.2,373.1L645.9,375.6M622.2,508.4L605.1,505.2M747.0,473.1L743.2,467.7M686.4,410.1L692.1,411.6M613.6,496.0L623.7,498.3M682.7,459.1L679.2,467.0M740.7,460.5L743.2,467.7M738.6,473.3L738.9,483.5M693.7,392.3L682.2,386.4M873.2,429.0L862.7,447.6M764.6,502.0L770.0,497.2M670.7,323.1L688.8,332.6M605.1,505.2L608.3,519.6M634.3,428.1L637.4,433.2M719.7,429.2L713.1,437.3M570.4,332.4L580.0,328.4M652.3,487.4L650.9,496.5M779.5,415.4L788.8,431.0M611.0,485.0L613.6,496.0M550.9,320.0L553.3,332.7M640.4,419.3L633.7,417.8M715.7,466.4L715.9,473.3M487.2,379.7L495.4,370.3M566.9,411.6L571.3,399.2M600.8,449.5L595.7,444.0M539.1,476.6L540.4,466.4M859.9,481.8L840.4,449.4M602.7,394.8L594.4,399.9M530.8,516.6L508.0,525.4M585.1,332.8L585.6,326.5M430.7,436.4L454.0,436.3M667.9,421.6L660.6,422.4M651.3,385.5L656.2,378.7M687.4,524.7L672.6,533.2M603.2,328.6L601.4,338.5M676.3,404.4L678.7,399.2M677.0,487.2L682.8,482.9M760.0,395.8L759.7,412.7M677.0,487.2L681.6,497.7M624.2,472.2L626.0,478.9M738.6,473.3L733.4,480.6M507.1,471.5L505.1,454.0M665.1,387.3L656.1,392.4M716.9,414.0L721.0,404.7M539.7,341.7L550.1,347.1M731.4,432.6L725.5,432.3M508.3,397.8L515.9,400.4M761.3,445.3L760.4,456.1M673.0,424.0L677.1,427.9M621.9,551.6L620.0,531.5M636.0,386.2L643.4,384.0M806.5,394.1L802.0,411.5M715.7,466.4L720.6,459.4M487.9,394.9L491.3,399.9M634.3,428.1L630.7,432.5M719.7,429.2L725.5,432.3M738.6,473.3L732.2,474.4M664.8,591.1L668.8,562.4M764.1,371.9L778.0,379.2M638.4,457.3L644.6,465.2M670.6,401.6L668.2,395.6M565.3,424.9L570.1,420.7M365.0,450.0L343.0,502.0M600.5,573.3L632.6,582.2M484.3,475.3L466.8,499.1M549.3,462.1L557.2,471.2M765.2,483.6L761.2,487.8M354.0,479.0L375.2,510.9M600.9,352.7L603.6,344.6M581.4,339.0L574.8,348.8M539.7,327.9L525.8,347.0M497.4,401.0L491.3,399.9M707.1,506.4L711.8,515.3M565.0,508.2L577.9,508.2M665.1,380.3L667.4,363.6M690.1,452.2L688.5,461.0M584.8,466.3L592.4,462.4M572.0,448.8L580.4,453.9M673.9,473.6L679.2,467.0M467.9,345.6L495.4,370.3M608.6,322.2L603.2,328.6M534.0,458.7L540.4,466.4M654.2,434.8L655.7,442.0M622.5,417.0L629.2,412.5M478.3,379.0L458.7,378.2M625.6,434.8L620.2,439.1M640.1,395.0L632.2,391.3M760.5,426.9L747.3,426.1M581.5,432.1L574.9,435.6M734.3,449.7L735.3,456.7M647.6,413.8L653.0,408.0M621.0,486.5L623.7,498.3M778.0,379.2L775.5,397.5M588.6,364.0L586.8,353.6M778.5,540.9L773.2,515.8M570.4,332.4L562.9,340.7M709.1,442.8L702.3,450.7M602.7,407.9L598.8,415.2M626.7,484.9L626.0,478.9M660.9,493.9L664.5,501.6M496.8,430.8L505.1,454.0M592.1,456.3L603.0,455.5M762.7,464.7L757.1,470.2M644.6,465.2L653.4,463.9M722.1,509.1L730.4,508.0M579.1,465.2L575.0,455.4M570.2,342.8L562.9,340.7M673.6,387.7L680.3,393.7M495.7,393.7L501.7,390.3M731.2,440.0L738.3,441.2M722.1,509.1L718.0,498.7M677.0,434.2L672.0,430.7M658.5,472.9L658.9,466.3M736.7,507.6L740.5,512.1M655.7,442.0L660.7,434.2M782.4,491.1L787.4,486.4M613.6,496.0L604.8,494.4M631.7,478.4L626.7,484.9M672.4,495.0L664.5,501.6M686.3,488.2L682.8,482.9M618.0,421.8L612.9,414.7M641.5,497.6L639.1,491.4M594.1,467.8L589.8,474.1M618.8,477.2L612.6,472.1M581.4,339.0L588.0,345.0M724.2,473.0L732.2,474.4M603.6,344.6L601.4,338.5M747.3,426.1L739.9,427.7M561.5,396.9L566.9,411.6M634.9,443.6L635.1,451.6M708.2,422.4L713.9,424.4M641.5,497.6L646.5,491.7M723.3,438.4L713.1,437.3M727.8,485.1L733.4,480.6M674.2,417.8L667.9,421.6M641.5,406.0L647.6,413.8M578.2,421.9L572.0,426.6M734.3,449.7L727.1,445.2M812.6,488.9L803.5,483.9M545.2,278.6L557.8,307.5M557.1,436.9L548.8,437.3M508.0,525.4L525.2,536.2M516.6,492.0L500.2,488.2M656.3,403.1L653.0,408.0M501.8,374.8L508.1,375.9M631.7,478.4L626.0,478.9M569.2,356.2L568.8,348.5M430.7,436.4L407.6,430.4M661.4,452.5L664.8,442.4M592.1,456.3L592.5,450.2M760.5,426.9L769.6,419.1M829.3,431.3L822.0,445.5M501.0,396.1L495.7,393.7M742.6,500.9L743.3,494.1M534.0,458.7L549.3,462.1M618.0,429.0L610.9,423.7M729.6,576.4L711.9,547.4M665.1,380.3L658.0,387.0M614.7,454.2L620.4,455.8M540.8,429.6L548.9,422.8M585.2,320.2L575.2,313.9M649.8,459.6L653.4,463.9M747.2,412.7L741.6,420.4M602.2,429.6L601.2,440.6M563.9,444.2L557.1,436.9M577.7,405.3L574.3,416.2M736.7,507.6L742.6,500.9M609.4,397.7L609.4,403.3M525.8,347.0L541.9,359.4M756.7,499.8L761.7,493.6M751.6,494.4L756.7,499.8M723.3,438.4L725.5,432.3M577.7,405.3L582.9,413.3M719.0,420.9L719.7,429.2M569.2,356.2L567.1,372.6M702.2,457.4L695.8,462.5M583.1,277.3L557.8,307.5M579.4,445.8L580.4,453.9M682.9,438.2L688.1,446.8M530.6,391.2L527.8,382.4M726.4,410.8L721.0,404.7M582.0,479.2L595.3,484.0M581.5,432.1L587.8,436.0M764.2,470.8L773.1,473.9M639.3,471.1L632.0,471.5M705.6,495.1L710.0,485.7M748.7,502.4L742.6,500.9M595.7,444.0L596.5,437.2M668.2,474.9L663.5,478.8M622.8,450.7L623.0,445.0M703.3,442.6L709.1,442.8M529.4,437.0L540.4,440.2M521.7,470.5L534.0,458.7M580.0,328.4L585.6,326.5M577.9,508.2L571.3,521.5M632.6,489.3L632.3,499.0M678.1,444.8L675.0,439.7M588.6,364.0L578.5,353.8M584.6,448.6L580.4,453.9M645.9,375.6L643.4,384.0M618.4,466.4L621.8,461.8M713.0,407.1L714.3,399.6M660.9,408.2L663.9,403.0M629.9,421.9L629.2,412.5M579.1,465.2L570.6,460.9M747.3,426.1L753.1,419.7M583.8,397.3L594.4,399.9M592.9,324.2L585.2,320.2M692.9,367.6L690.1,381.2M737.6,388.8L751.3,378.1M632.3,335.1L616.8,339.3M496.8,430.8L492.5,416.0M467.9,345.6L507.3,358.4M780.0,466.0L794.5,473.7M533.7,497.0L530.8,516.6M391.1,412.2L407.6,430.4M605.1,478.5L612.5,479.0M624.4,350.7L632.3,335.1M729.6,576.4L697.9,567.4M670.6,401.6L663.9,403.0M667.7,452.5L676.4,458.9M508.3,397.8L501.0,396.1M590.2,549.6L603.7,535.0M693.7,392.3L680.3,393.7M779.5,415.4L770.0,407.7M681.9,405.9L676.3,404.4M719.9,452.8L721.0,446.4M676.4,458.9L671.9,468.3M872.0,470.0L876.2,470.0M640.1,395.0L639.6,400.6M652.3,487.4L646.5,491.7M608.4,442.7L607.3,435.2M616.5,410.3L618.9,404.9M759.7,412.7L770.0,407.7M692.6,404.7L681.9,405.9M407.4,519.8L439.5,528.7M634.3,428.1L633.7,417.8M725.4,425.3L725.5,432.3M567.6,432.2L554.7,429.5M636.5,517.3L644.5,508.1M650.2,447.0L641.7,450.3M744.9,438.2L747.3,426.1M727.8,485.1L726.3,491.5M655.2,414.4L660.9,408.2M661.9,415.7L660.6,422.4M532.6,376.1L552.0,369.2M731.9,526.1L717.4,525.3M504.7,403.3L515.9,400.4M788.8,431.0L794.3,443.2M676.3,404.4L679.3,411.0M774.8,430.2L788.8,431.0M664.2,460.7L666.7,466.1M764.6,502.0L756.7,499.8M549.1,453.6L533.8,446.4M760.4,456.1L762.7,464.7M584.6,304.0L575.2,313.9M497.8,385.2L495.8,377.7M530.6,391.2L523.8,398.3M506.4,312.2L539.7,327.9M556.9,405.0L561.5,396.9M560.8,479.5L551.8,489.3M707.7,395.6L701.7,390.0M734.5,422.5L731.8,415.1M622.5,417.0L616.5,410.3M563.1,386.9L575.7,379.8M731.1,466.2L738.6,473.3M565.0,508.2L571.4,498.1M595.8,427.3L595.0,420.4M729.6,576.4L729.4,540.0M682.9,438.2L690.6,437.1M806.5,394.1L788.9,403.1M714.8,372.9L700.9,382.2M685.8,415.8L688.1,421.1M669.2,482.3L675.5,479.1M484.3,475.3L500.2,488.2M672.4,495.0L660.9,493.9M703.9,486.1L705.6,495.1M634.0,398.1L623.2,401.2M662.1,397.0L656.1,392.4M821.6,402.0L802.0,411.5M723.9,496.9L726.3,491.5M737.2,434.7L744.9,438.2M673.9,473.6L671.9,468.3M651.0,469.0L644.6,465.2M581.5,432.1L572.0,426.6M686.3,488.2L690.6,481.7M736.7,507.6L731.8,498.2M584.5,423.7L581.5,432.1M753.8,515.0L761.3,511.3M652.9,421.7L660.6,422.4M688.1,446.8L696.7,448.5M583.1,277.3L605.9,289.2M354.0,479.0L343.0,502.0M651.0,469.0L658.5,472.9M558.8,422.6L548.9,422.8M556.9,405.0L542.2,403.0M596.1,378.1L575.7,379.8M731.1,466.2L724.2,473.0M639.4,540.7L620.0,531.5M690.6,437.1L685.8,433.4M549.3,462.1L550.1,478.4M681.6,497.7L675.8,505.3M534.0,458.7L533.8,446.4M594.3,496.2L603.6,487.4M654.7,506.1L644.5,508.1M532.6,376.1L515.0,370.1M693.9,419.3L700.3,420.6M497.8,385.2L491.6,387.1M641.5,497.6L634.5,506.7M569.2,356.2L574.8,348.8M533.8,446.4L529.4,437.0M495.8,377.7L491.6,387.1M731.2,440.0L723.3,438.4M827.4,505.5L828.7,484.7M750.1,364.6L733.5,378.3M792.1,386.6L775.5,397.5M530.6,391.2L549.5,392.8M650.9,496.5L644.5,508.1M586.7,488.6L594.3,496.2M604.1,422.5L612.9,414.7M637.6,477.2L632.0,471.5M671.6,410.3L667.5,416.0M782.4,491.1L778.1,481.0M634.9,443.6L641.7,450.3M717.6,441.8L723.3,438.4M628.9,458.3L622.8,450.7M645.0,363.5L632.6,360.8M660.9,493.9L650.9,496.5M560.4,265.4L545.2,278.6M731.9,526.1L737.3,516.8M630.7,432.5L625.6,434.8M527.6,421.8L529.4,437.0M756.7,499.8L758.6,505.7M666.8,343.0L649.6,331.7M738.3,441.2L741.5,447.4M568.3,564.4L567.1,543.4M725.4,425.3L726.6,418.1M773.1,473.9L770.9,465.4M487.2,379.7L484.5,387.5M705.5,341.3L721.1,349.4" fill="none" stroke="#000" stroke-width="1" shape-rendering="crispEdges"/>
<path d="M652,503 L737,429" stroke="#fff" stroke-opacity="0.16" stroke-width="6" stroke-linecap="round"/>
</g>
<polygon points="560.4,265.4 884.7,435.0 876.0,471.0 854.3,560.0 834.7,633.0 819.0,690.4 806.0,758.0 795.6,820.7 793.5,849.0 603.0,1012.0 566.3,998.1 529.6,983.2 495.2,971.8 421.9,951.1 348.5,930.5 314.2,924.8 276.4,917.9 263.7,846.5 284.0,807.2 299.7,739.4 317.8,640.0 322.0,606.0 329.0,574.0 336.0,540.0 343.0,502.0 354.0,479.0 365.0,450.0 371.7,429.0" fill="none" stroke="#000" stroke-width="1"/>
<text x="1165.40" y="211.00" font-size="12.50" fill="#333" font-weight="bold" textLength="209.20" lengthAdjust="spacingAndGlyphs">Extreme Strength: C+V+M (D100.0%)</text>
<text x="1165.40" y="239.00" font-size="12.50" fill="#333" textLength="82.30" lengthAdjust="spacingAndGlyphs">Load increment</text>
<rect x="1315" y="224" width="592" height="20.6" fill="#e3e3e3"/>
<text x="1321.80" y="239.00" font-size="12.50" fill="#222" textLength="92.80" lengthAdjust="spacingAndGlyphs">D100.0%, L100.0%</text>
<path d="M1895.5,231.5 H1903 L1899.2,236.5 Z" fill="#111"/>
<rect x="1165.5" y="255.5" width="741.5" height="91.5" fill="#fff" stroke="#a9a9a9" stroke-width="1"/>
<rect x="1166" y="256" width="741" height="32" fill="#f0f0f0"/>
<rect x="1166" y="288.5" width="741" height="28.8" fill="#e0e0e0"/>
<rect x="1166" y="288.2" width="741" height="1" fill="#b0b0b0"/>
<rect x="1166" y="317.3" width="741" height="1" fill="#b0b0b0"/>
<rect x="1193.8" y="256" width="1" height="91" fill="#b5b5b5"/>
<rect x="1275.8" y="256" width="1" height="91" fill="#b5b5b5"/>
<rect x="1359.9" y="256" width="1" height="91" fill="#b5b5b5"/>
<rect x="1468.8" y="256" width="1" height="91" fill="#b5b5b5"/>
<rect x="1521.9" y="256" width="1" height="91" fill="#b5b5b5"/>
<rect x="1571.9" y="256" width="1" height="91" fill="#b5b5b5"/>
<rect x="1621.5" y="256" width="1" height="91" fill="#b5b5b5"/>
<rect x="1165" y="346" width="742" height="1.5" fill="#a9a9a9"/>
<text x="1199.50" y="277.20" font-size="12.50" fill="#333" font-weight="bold" textLength="46.91" lengthAdjust="spacingAndGlyphs">Member</text>
<text x="1281.00" y="277.20" font-size="12.50" fill="#333" font-weight="bold" textLength="49.70" lengthAdjust="spacingAndGlyphs">Min/max</text>
<text x="1365.00" y="277.20" font-size="12.50" fill="#333" font-weight="bold" textLength="96.00" lengthAdjust="spacingAndGlyphs">Displacement [in]</text>
<text x="1474.00" y="277.20" font-size="12.50" fill="#333" font-weight="bold" textLength="28.59" lengthAdjust="spacingAndGlyphs">X [in]</text>
<text x="1527.00" y="277.20" font-size="12.50" fill="#333" font-weight="bold" textLength="28.01" lengthAdjust="spacingAndGlyphs">Y [in]</text>
<text x="1577.00" y="277.20" font-size="12.50" fill="#333" font-weight="bold" textLength="27.70" lengthAdjust="spacingAndGlyphs">Z [in]</text>
<path d="M1258.0,268.5 H1266.0 L1263.0,272.5 V277 H1261.0 V272.5 Z" fill="#333"/>
<path d="M1342.0,268.5 H1350.0 L1347.0,272.5 V277 H1345.0 V272.5 Z" fill="#333"/>
<path d="M1177.5,298.5 L1181.5,303 L1177.5,307.5" fill="none" stroke="#444" stroke-width="1.2"/>
<text x="1199.50" y="308.40" font-size="12.50" fill="#444" textLength="22.50" lengthAdjust="spacingAndGlyphs">CB 1</text>
<text x="1281.00" y="308.40" font-size="12.50" fill="#444" textLength="53.59" lengthAdjust="spacingAndGlyphs">Maximum</text>
<text x="1364.80" y="308.40" font-size="12.50" fill="#444" textLength="32.20" lengthAdjust="spacingAndGlyphs">0.0621</text>
<text x="1474.00" y="308.40" font-size="12.50" fill="#444" textLength="45.00" lengthAdjust="spacingAndGlyphs">-7&quot;13/16</text>
<text x="1527.00" y="308.40" font-size="12.50" fill="#444" textLength="10.00" lengthAdjust="spacingAndGlyphs">0&quot;</text>
<text x="1577.00" y="308.40" font-size="12.50" fill="#444" textLength="33.00" lengthAdjust="spacingAndGlyphs">-5&quot;1/8</text>
<text x="1199.50" y="337.20" font-size="12.50" fill="#444" textLength="22.50" lengthAdjust="spacingAndGlyphs">CB 1</text>
<text x="1281.00" y="337.20" font-size="12.50" fill="#444" textLength="52.60" lengthAdjust="spacingAndGlyphs">Minimum</text>
<text x="1364.80" y="337.20" font-size="12.50" fill="#444" textLength="32.20" lengthAdjust="spacingAndGlyphs">0.0000</text>
<text x="1474.00" y="337.20" font-size="12.50" fill="#444" textLength="28.00" lengthAdjust="spacingAndGlyphs">1&quot;3/4</text>
<text x="1527.00" y="337.20" font-size="12.50" fill="#444" textLength="10.00" lengthAdjust="spacingAndGlyphs">0&quot;</text>
<text x="1577.00" y="337.20" font-size="12.50" fill="#444" textLength="38.01" lengthAdjust="spacingAndGlyphs">-9&quot;3/16</text>
<rect x="1167" y="638.5" width="740" height="1.5" fill="#e2e2e2"/>
<text x="7.30" y="1137.60" font-size="13.08" fill="#f2f2f2" textLength="90.00" lengthAdjust="spacingAndGlyphs">Design Code: ACI</text>
<text x="114.20" y="1137.60" font-size="13.08" fill="#f2f2f2" textLength="90.00" lengthAdjust="spacingAndGlyphs">Rounding: Metric</text>
<text x="221.25" y="1137.60" font-size="13.08" fill="#f2f2f2" textLength="141.25" lengthAdjust="spacingAndGlyphs">Presentation Units: Custom</text>
</svg></body></html>
